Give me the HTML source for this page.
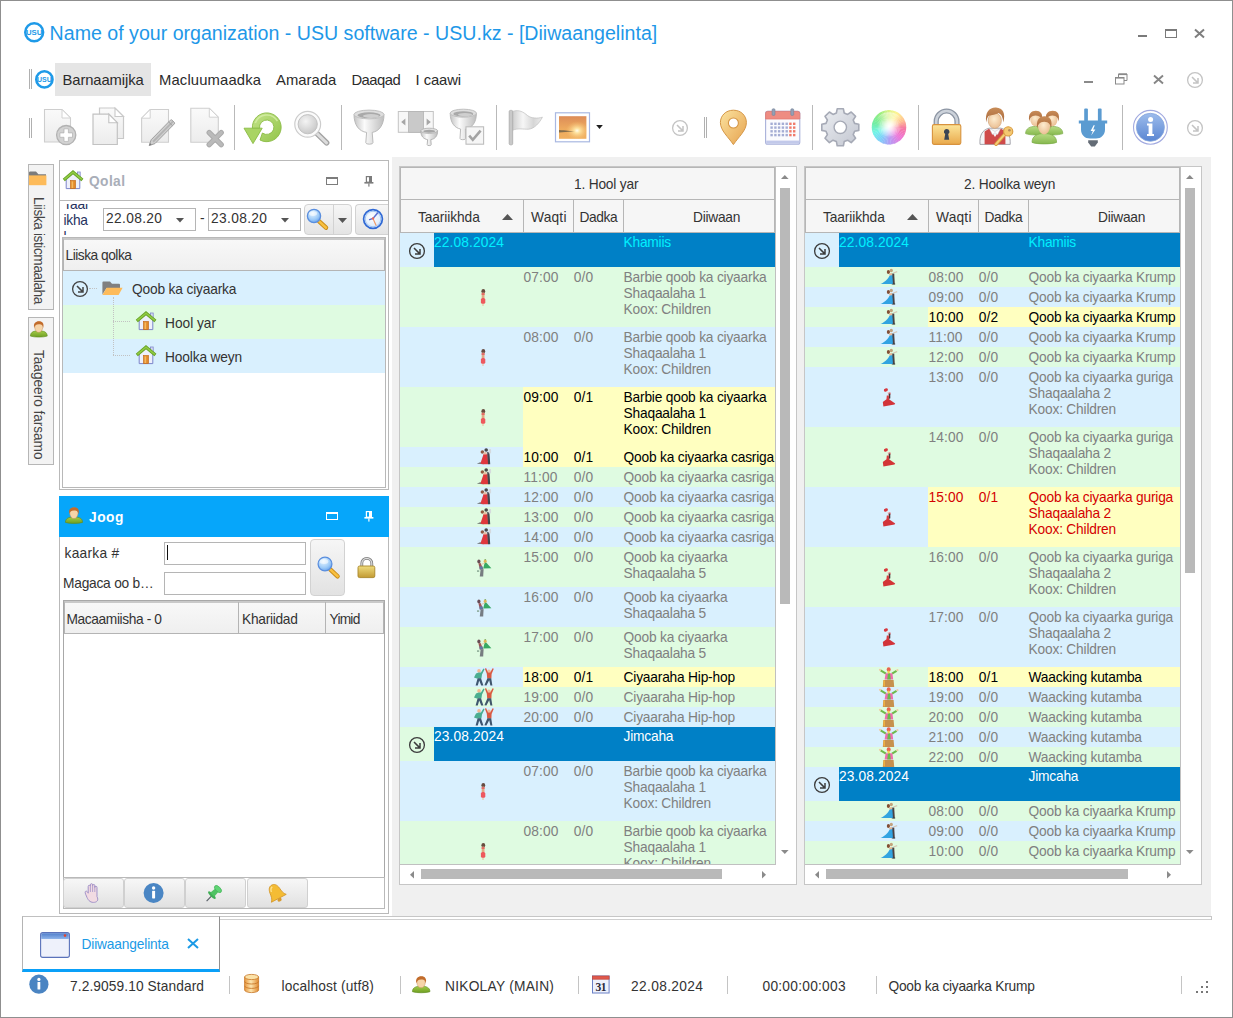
<!DOCTYPE html><html><head><meta charset='utf-8'><title>USU</title><style>
*{box-sizing:border-box;margin:0;padding:0}
html,body{width:1233px;height:1018px;overflow:hidden;background:#fff}
body{font-family:"Liberation Sans",sans-serif;font-size:13.75px;color:#222;position:relative}
.a{position:absolute}
.t{position:absolute;white-space:nowrap;line-height:16px}
.win{position:absolute;left:0;top:0;width:1233px;height:1018px;border:1px solid #8f8f8f}
.sep{position:absolute;width:1px;background:#b9b9b9}
.grip{position:absolute;width:3px;border-left:1px solid #b0b0b0;border-right:1px solid #b0b0b0}
.hdr{background:linear-gradient(#f8f8f8,#efefef);}
.gb{color:#808080}
.row{position:absolute;left:0;width:373px}
.bl{background:#d9f0fe}
.gr{background:#dffbe1}
.ye{background:#ffffc0}
.d{letter-spacing:.35px}
svg{position:absolute;overflow:visible}
</style></head><body>
<div class='win'></div>
<svg class='a' style='left:22.900000000000002px;top:21.3px' width='22.4' height='22.4' viewBox='-11.2 -11.2 22.4 22.4'><circle r='8.95' fill='#fff' stroke='#1e9ae8' stroke-width='2.5'/><text x='0' y='2.808' font-family='Liberation Sans' font-weight='bold' font-size='7.8' text-anchor='middle' fill='#1e9ae8' letter-spacing='0'>USU</text></svg>
<div class='t' style='left:49.6px;top:19px;font-size:19.6px;line-height:28px;color:#1e98e8'>Name of your organization - USU software - USU.kz - [Diiwaangelinta]</div>
<div class='a' style='left:1138px;top:35px;width:9px;height:2px;background:#7a7a7a'></div>
<div class='a' style='left:1165px;top:29px;width:12px;height:9px;border:1px solid #7a7a7a;border-top-width:2px'></div>
<svg style='left:1194px;top:29px' width='11' height='9' viewBox='0 0 11 9'><path d='M1 0.5 L10 8.5 M10 0.5 L1 8.5' stroke='#7e7e7e' stroke-width='2' fill='none'/></svg>
<div class='grip' style='left:29px;top:69px;height:20px'></div>
<svg class='a' style='left:34.2px;top:68.8px' width='20.8' height='20.8' viewBox='-10.4 -10.4 20.8 20.8'><circle r='8.1' fill='#fff' stroke='#1e9ae8' stroke-width='2.6'/><text x='0' y='2.52' font-family='Liberation Sans' font-weight='bold' font-size='7' text-anchor='middle' fill='#1e9ae8' letter-spacing='0'>USU</text></svg>
<div class='a' style='left:55px;top:63px;width:96px;height:33px;background:#e5e5e5'></div>
<div class='t' style='left:62.6px;top:70.6px;font-size:14.8px;line-height:18px;letter-spacing:-0.12px;color:#2b2b2b'>Barnaamijka</div>
<div class='t' style='left:159px;top:70.6px;font-size:14.8px;line-height:18px;letter-spacing:0.15px;color:#2b2b2b'>Macluumaadka</div>
<div class='t' style='left:276px;top:70.6px;font-size:14.8px;line-height:18px;letter-spacing:0.03px;color:#2b2b2b'>Amarada</div>
<div class='t' style='left:351.4px;top:70.6px;font-size:14.8px;line-height:18px;letter-spacing:-0.5px;color:#2b2b2b'>Daaqad</div>
<div class='t' style='left:415.6px;top:70.6px;font-size:14.8px;line-height:18px;letter-spacing:-0.09px;color:#2b2b2b'>I caawi</div>
<div class='a' style='left:1084px;top:81px;width:9px;height:2px;background:#8a8a8a'></div>
<svg style='left:1115px;top:73px' width='13' height='12' viewBox='0 0 13 12'><path d='M3.5 4 V1 H12 V7.5 H9' stroke='#8a8a8a' stroke-width='1' fill='none'/><path d='M3.5 1.3 H12' stroke='#8a8a8a' stroke-width='1.6'/><rect x='0.5' y='4.5' width='8.5' height='6.5' fill='#fff' stroke='#8a8a8a'/><path d='M0.5 4.8 H9' stroke='#8a8a8a' stroke-width='1.6'/></svg>
<svg style='left:1153px;top:75px' width='11' height='9' viewBox='0 0 11 9'><path d='M1 0.5 L10 8.5 M10 0.5 L1 8.5' stroke='#868686' stroke-width='1.9' fill='none'/></svg>
<svg style='left:1186px;top:70.5px' width='18' height='18' viewBox='-9 -9 18 18'><circle r='7.4' fill='none' stroke='#c4c4c4' stroke-width='1.3'/><path d='M-3 -3 L2.6 2.6 M3 -2 V3 H-2' stroke='#c4c4c4' stroke-width='1.5' fill='none'/></svg>
<div class='grip' style='left:29px;top:118px;height:20px'></div>
<div class='sep' style='left:234px;top:105px;height:45px'></div>
<div class='sep' style='left:340.5px;top:105px;height:45px'></div>
<div class='sep' style='left:496px;top:105px;height:45px'></div>
<div class='sep' style='left:812px;top:105px;height:45px'></div>
<div class='sep' style='left:918px;top:105px;height:45px'></div>
<div class='sep' style='left:1122px;top:105px;height:45px'></div>
<div class='grip' style='left:704px;top:117px;height:21px'></div>
<svg style='left:670.5px;top:118.5px' width='18' height='18' viewBox='-9 -9 18 18'><circle r='7.4' fill='none' stroke='#c4c4c4' stroke-width='1.3'/><path d='M-3 -3 L2.6 2.6 M3 -2 V3 H-2' stroke='#c4c4c4' stroke-width='1.5' fill='none'/></svg>
<svg style='left:1186px;top:118.5px' width='18' height='18' viewBox='-9 -9 18 18'><circle r='7.4' fill='none' stroke='#c4c4c4' stroke-width='1.3'/><path d='M-3 -3 L2.6 2.6 M3 -2 V3 H-2' stroke='#c4c4c4' stroke-width='1.5' fill='none'/></svg>
<svg style='left:0;top:100px' width='1233' height='52' viewBox='0 100 1233 52'>
<defs>
<linearGradient id='gpg' x1='0' y1='0' x2='0' y2='1'><stop offset='0' stop-color='#fafafa'/><stop offset='1' stop-color='#ececec'/></linearGradient>
<linearGradient id='ggr' x1='0' y1='0' x2='1' y2='1'><stop offset='0' stop-color='#c4e48a'/><stop offset='1' stop-color='#92c44a'/></linearGradient>
<radialGradient id='glens' cx='.4' cy='.35' r='.7'><stop offset='0' stop-color='#f4f4f4'/><stop offset='1' stop-color='#c6c6c6'/></radialGradient>
<linearGradient id='gfun' x1='0' y1='0' x2='1' y2='0'><stop offset='0' stop-color='#c4c4c4'/><stop offset='.35' stop-color='#fbfbfb'/><stop offset='1' stop-color='#bdbdbd'/></linearGradient>
<linearGradient id='gflag' x1='0' y1='0' x2='1' y2='0'><stop offset='0' stop-color='#cfcfcf'/><stop offset='.35' stop-color='#f6f6f6'/><stop offset='.7' stop-color='#d6d6d6'/><stop offset='1' stop-color='#ededed'/></linearGradient>
<linearGradient id='gsun' x1='0' y1='0' x2='0' y2='1'><stop offset='0' stop-color='#dc8c58'/><stop offset='.55' stop-color='#eeaa5e'/><stop offset='1' stop-color='#f0b060'/></linearGradient>
<radialGradient id='gglow' cx='.66' cy='.64' r='.42'><stop offset='0' stop-color='#fffdf0'/><stop offset='.25' stop-color='#ffe9a8' stop-opacity='.9'/><stop offset='1' stop-color='#f6c070' stop-opacity='0'/></radialGradient>
<linearGradient id='ggold' x1='0' y1='0' x2='0' y2='1'><stop offset='0' stop-color='#fce59a'/><stop offset='1' stop-color='#e9a94c'/></linearGradient>
<linearGradient id='gpin' x1='0' y1='0' x2='1' y2='1'><stop offset='0' stop-color='#fbe3a0'/><stop offset='1' stop-color='#e6a24e'/></linearGradient>
<linearGradient id='gshk' x1='0' y1='0' x2='1' y2='0'><stop offset='0' stop-color='#8e98a6'/><stop offset='.5' stop-color='#d6dbe2'/><stop offset='1' stop-color='#8e98a6'/></linearGradient>
<linearGradient id='ggear' x1='0' y1='0' x2='1' y2='1'><stop offset='0' stop-color='#eceef2'/><stop offset='1' stop-color='#c2c6d0'/></linearGradient>
<linearGradient id='ginfo' x1='0' y1='0' x2='0' y2='1'><stop offset='0' stop-color='#9dbcec'/><stop offset='1' stop-color='#5a86d2'/></linearGradient>
<linearGradient id='gbody' x1='0' y1='0' x2='0' y2='1'><stop offset='0' stop-color='#b8dc84'/><stop offset='1' stop-color='#86b84e'/></linearGradient>
<linearGradient id='ghair' x1='0' y1='0' x2='0' y2='1'><stop offset='0' stop-color='#c88c58'/><stop offset='1' stop-color='#a8683a'/></linearGradient>
<radialGradient id='gface' cx='.45' cy='.4' r='.7'><stop offset='0' stop-color='#fdeccf'/><stop offset='1' stop-color='#e8b88a'/></radialGradient>
</defs>

<!-- 1 new doc -->
<path d='M44.5 109.5 H62 L70.5 118 V142 H44.5 Z' fill='url(#gpg)' stroke='#cecece' stroke-width='1.1'/>
<path d='M62 109.5 V118 H70.5 Z' fill='#fff' stroke='#d2d2d2' stroke-width='1'/>
<circle cx='66.2' cy='135.1' r='9.6' fill='#d2d2d2' stroke='#b2b2b2' stroke-width='1.3'/>
<path d='M64 128.8 h4.4 v4.1 h4.1 v4.4 h-4.1 v4.1 h-4.4 v-4.1 h-4.1 v-4.4 h4.1 Z' fill='#fff' stroke='#b0b0b0' stroke-width='.7'/>

<!-- 2 copy -->
<path d='M99.5 108 H115 L123.5 116.5 V138.5 H99.5 Z' fill='url(#gpg)' stroke='#c9c9c9' stroke-width='1.2'/>
<path d='M115 108 V116.5 H123.5 Z' fill='#fff' stroke='#c9c9c9' stroke-width='1.1'/>
<path d='M93 114.2 H108.8 L117.3 122.7 V144.5 H93 Z' fill='url(#gpg)' stroke='#c2c2c2' stroke-width='1.2'/>
<path d='M108.8 114.2 V122.7 H117.3 Z' fill='#fff' stroke='#c2c2c2' stroke-width='1.1'/>

<!-- 3 edit -->
<path d='M150.2 109.5 H168.5 V142.3 H141.6 V118.2 Z' fill='url(#gpg)' stroke='#cecece' stroke-width='1.1'/>
<path d='M150.2 109.5 V118.2 H141.6 Z' fill='#fff' stroke='#d2d2d2' stroke-width='1'/>
<g transform='translate(149.2 145.6) rotate(-45.5)'>
<path d='M0 0 L5.5 -2.7 H33 a1.2 1.2 0 0 1 1.2 1.2 V1.5 a1.2 1.2 0 0 1 -1.2 1.2 H5.5 Z' fill='#cfcfcf' stroke='#9c9c9c' stroke-width='.9'/>
<path d='M5.5 -0.9 H34 V1 H5.5 Z' fill='#b4b4b4'/>
<path d='M0 0 L2.4 -1.2 V1.2 Z' fill='#7e7e7e'/>
<path d='M30.5 -2.7 V2.7' stroke='#9c9c9c' stroke-width='.9'/>
</g>

<!-- 4 delete -->
<path d='M190.8 108.2 H209.3 L218.3 117.2 V142.3 H190.8 Z' fill='url(#gpg)' stroke='#cecece' stroke-width='1.1'/>
<path d='M209.3 108.2 V117.2 H218.3 Z' fill='#fff' stroke='#d2d2d2' stroke-width='1'/>
<path d='M209.2 132.6 L221.2 144.6 M221.2 132.6 L209.2 144.6' stroke='#ababab' stroke-width='5.4' stroke-linecap='round'/>
<path d='M209.2 132.6 L221.2 144.6 M221.2 132.6 L209.2 144.6' stroke='#bababa' stroke-width='3.4' stroke-linecap='round'/>

<!-- 5 refresh -->
<path d='M252.4 128.4 A14.4 14.4 0 1 1 260.0 140.0 L262.4 133.0 A7.2 7.2 0 1 0 259.6 128.4 Z' fill='url(#ggr)' stroke='#8abb44' stroke-width='.9'/>
<path d='M244 128.2 H262.2 L253 143.6 Z' fill='#a9d464' stroke='#8abb44' stroke-width='.9' stroke-linejoin='round'/>
<path d='M255.3 123.1 A12.2 12.2 0 0 1 277.4 121.2' fill='none' stroke='#d6efa6' stroke-width='1.6' opacity='.8'/>

<!-- 6 search -->
<path d='M316 132.6 L326.6 142.8' stroke='#a2a2a2' stroke-width='5.6' stroke-linecap='round'/>
<path d='M316 132.6 L326.6 142.8' stroke='#dcdcdc' stroke-width='3' stroke-linecap='round'/>
<circle cx='307.7' cy='124.2' r='12.9' fill='#fbfbfb' stroke='#cdcdcd' stroke-width='1.2'/>
<circle cx='307.7' cy='124.2' r='9.6' fill='url(#glens)' stroke='#c2c2c2' stroke-width='1'/>

<!-- 7 funnel -->
<path d='M354 114.5 C354 125 359 131.4 366.6 132.4 L365.8 142.6 a3.6 1.6 0 0 0 7.2 0 L372.2 132.4 C379 131.4 384 125 384 114.5 Z' fill='url(#gfun)' stroke='#b4b4b4' stroke-width='.9'/>
<ellipse cx='369' cy='114.5' rx='15' ry='4.4' fill='#dedede' stroke='#c0c0c0' stroke-width='1'/>
<ellipse cx='369' cy='115.2' rx='11.6' ry='2.9' fill='#a9a9a9'/>
<ellipse cx='371' cy='116' rx='8' ry='1.9' fill='#cfcfcf'/>

<!-- 8 slider + funnel -->
<rect x='398.3' y='111.5' width='35' height='20.8' fill='#f7f7f7' stroke='#c4c4c4' stroke-width='1'/>
<rect x='408.6' y='111.5' width='15' height='20.8' fill='#c9c9c9' stroke='#b4b4b4' stroke-width='.8'/>
<path d='M405.4 118.4 V125.6 L401.2 122 Z' fill='#a6a6a6'/>
<path d='M426.6 118.4 V125.6 L430.8 122 Z' fill='#a6a6a6'/>
<path d='M420.8 130.8 C420.8 136.4 423.6 139 427.6 139.6 L427.2 144.6 a2 1 0 0 0 4 0 L430.8 139.6 C434.8 139 437.6 136.4 437.6 130.8 Z' fill='url(#gfun)' stroke='#aeaeae' stroke-width='.9'/>
<ellipse cx='429.2' cy='130.8' rx='8.4' ry='2.6' fill='#e2e2e2' stroke='#b4b4b4' stroke-width='.9'/>
<ellipse cx='429.2' cy='131.2' rx='6' ry='1.5' fill='#a6a6a6'/>

<!-- 9 funnel + check -->
<path d='M450.2 113.2 C450.2 122.6 454.6 128 460.6 129 L460 138.4 a2.8 1.3 0 0 0 5.6 0 L465.4 129 C472 128 476.4 122.6 476.4 113.2 Z' fill='url(#gfun)' stroke='#b4b4b4' stroke-width='.9'/>
<ellipse cx='463.3' cy='113.2' rx='13.1' ry='4' fill='#dedede' stroke='#c0c0c0' stroke-width='1'/>
<ellipse cx='463.3' cy='113.9' rx='10' ry='2.6' fill='#a9a9a9'/>
<ellipse cx='465' cy='114.6' rx='7' ry='1.7' fill='#cfcfcf'/>
<rect x='466' y='126.8' width='17.6' height='17.4' fill='#f6f6f6' stroke='#bdbdbd' stroke-width='1.1'/>
<path d='M469.2 135.6 L472.8 139.8 L480.6 130.6' fill='none' stroke='#a4a4a4' stroke-width='2.6'/>

<!-- 10 flag -->
<path d='M512.6 111.4 C519 109.2 523.6 112.2 527.6 115.6 C531.6 118.6 537.6 118.6 542.4 117.2 C539.6 122.6 534.6 128.6 528.6 129.2 C523.4 129.4 518.6 127.8 512.6 130.2 Z' fill='url(#gflag)' stroke='#c4c4c4' stroke-width='.8'/>
<rect x='509.2' y='110.4' width='3.5' height='34.4' rx='1.2' fill='#c9c9c9' stroke='#a9a9a9' stroke-width='.8'/>

<!-- 11 picture -->
<rect x='555.5' y='112.8' width='34' height='29' fill='#fff' stroke='#a9b8e2' stroke-width='1.2'/>
<rect x='559' y='116.2' width='27.4' height='22.6' fill='url(#gsun)'/>
<rect x='559' y='116.2' width='27.4' height='22.6' fill='url(#gglow)'/>
<path d='M559 130 C566 130.4 570 131.2 575 131.2 L559 132.4 Z' fill='#6e6048' opacity='.85'/>
<path d='M596.2 125 H602.8 L599.5 128.9 Z' fill='#1e1e1e'/>

<!-- 12 map pin -->
<path d='M733.4 110.2 C741.2 110.2 746.4 115.8 746.4 122.6 C746.4 130.6 738.4 137 733.4 144.6 C728.4 137 720.4 130.6 720.4 122.6 C720.4 115.8 725.6 110.2 733.4 110.2 Z' fill='url(#gpin)' stroke='#d59645' stroke-width='1'/>
<circle cx='733.4' cy='123' r='5' fill='#fff' stroke='#d59645' stroke-width='1.1'/>

<!-- 13 calendar -->
<rect x='765.6' y='111.4' width='34.2' height='32.8' rx='2' fill='#fbfbfe' stroke='#a9b1da' stroke-width='1.1'/>
<path d='M765.6 119 V113.4 a2 2 0 0 1 2 -2 H797.8 a2 2 0 0 1 2 2 V119 Z' fill='#ee8c82' stroke='#e27a72' stroke-width='.8'/>
<rect x='766.2' y='140.6' width='33' height='3.2' fill='#c2c9ea'/>
<rect x='772.1' y='108.8' width='2.9' height='6.6' rx='1' fill='#93a0b6' stroke='#76849a' stroke-width='.6'/>
<rect x='790.8' y='108.8' width='2.9' height='6.6' rx='1' fill='#93a0b6' stroke='#76849a' stroke-width='.6'/>
<g fill='#a5add4'>
<rect x='770.4' y='122.6' width='2.4' height='2.4'/><rect x='774.2' y='122.6' width='2.4' height='2.4'/><rect x='777.9' y='122.6' width='2.4' height='2.4'/><rect x='781.7' y='122.6' width='2.4' height='2.4'/><rect x='785.5' y='122.6' width='2.4' height='2.4'/><rect x='789.2' y='122.6' width='2.4' height='2.4' fill='#f07a6a'/><rect x='793.0' y='122.6' width='2.4' height='2.4' fill='#f07a6a'/><rect x='770.4' y='126.4' width='2.4' height='2.4'/><rect x='774.2' y='126.4' width='2.4' height='2.4'/><rect x='777.9' y='126.4' width='2.4' height='2.4'/><rect x='781.7' y='126.4' width='2.4' height='2.4'/><rect x='785.5' y='126.4' width='2.4' height='2.4'/><rect x='789.2' y='126.4' width='2.4' height='2.4' fill='#f07a6a'/><rect x='793.0' y='126.4' width='2.4' height='2.4' fill='#f07a6a'/><rect x='770.4' y='130.1' width='2.4' height='2.4'/><rect x='774.2' y='130.1' width='2.4' height='2.4'/><rect x='777.9' y='130.1' width='2.4' height='2.4'/><rect x='781.7' y='130.1' width='2.4' height='2.4'/><rect x='785.5' y='130.1' width='2.4' height='2.4'/><rect x='789.2' y='130.1' width='2.4' height='2.4' fill='#f07a6a'/><rect x='793.0' y='130.1' width='2.4' height='2.4' fill='#f07a6a'/><rect x='770.4' y='133.9' width='2.4' height='2.4'/><rect x='774.2' y='133.9' width='2.4' height='2.4'/><rect x='777.9' y='133.9' width='2.4' height='2.4'/><rect x='781.7' y='133.9' width='2.4' height='2.4'/><rect x='785.5' y='133.9' width='2.4' height='2.4'/><rect x='789.2' y='133.9' width='2.4' height='2.4' fill='#f07a6a'/><rect x='793.0' y='133.9' width='2.4' height='2.4' fill='#f07a6a'/>
</g>

<!-- 14 gear -->
<path d='M836.4 113.0 L837.2 108.8 L843.4 108.8 L844.2 113.0 L847.6 114.4 L851.2 112.0 L855.6 116.4 L853.2 120.0 L854.6 123.4 L858.8 124.2 L858.8 130.4 L854.6 131.2 L853.2 134.6 L855.6 138.2 L851.2 142.6 L847.6 140.2 L844.2 141.6 L843.4 145.8 L837.2 145.8 L836.4 141.6 L833.0 140.2 L829.4 142.6 L825.0 138.2 L827.4 134.6 L826.0 131.2 L821.8 130.4 L821.8 124.2 L826.0 123.4 L827.4 120.0 L825.0 116.4 L829.4 112.0 L833.0 114.4 Z' fill='url(#ggear)' stroke='#a6aab6' stroke-width='1.6' stroke-linejoin='round'/><circle cx='840.3' cy='127.3' r='6.2' fill='#fff' stroke='#a6aab6' stroke-width='1.4'/>

<!-- 15 colour wheel: foreignObject-free fallback drawn with wedges -->
<defs><radialGradient id='gwh' cx='.5' cy='.47' r='.5'><stop offset='0' stop-color='#fff'/><stop offset='.2' stop-color='#fff' stop-opacity='.8'/><stop offset='.7' stop-color='#fff' stop-opacity='0'/></radialGradient><linearGradient id='gwh2' x1='0' y1='0' x2='0' y2='1'><stop offset='0' stop-color='#fff' stop-opacity='.55'/><stop offset='.5' stop-color='#fff' stop-opacity='0'/></linearGradient></defs><path d='M889 127.3 L888.82 110.10 A17.2 17.2 0 0 1 890.98 110.21 Z' fill='#e0f486'/><path d='M889 127.3 L890.62 110.18 A17.2 17.2 0 0 1 892.75 110.51 Z' fill='#e7f488'/><path d='M889 127.3 L892.40 110.44 A17.2 17.2 0 0 1 894.49 111.00 Z' fill='#edf48b'/><path d='M889 127.3 L894.14 110.89 A17.2 17.2 0 0 1 896.16 111.66 Z' fill='#f5f48d'/><path d='M889 127.3 L895.83 111.51 A17.2 17.2 0 0 1 897.76 112.50 Z' fill='#fbf490'/><path d='M889 127.3 L897.44 112.32 A17.2 17.2 0 0 1 899.26 113.49 Z' fill='#fff091'/><path d='M889 127.3 L898.96 113.28 A17.2 17.2 0 0 1 900.64 114.64 Z' fill='#ffe791'/><path d='M889 127.3 L900.37 114.40 A17.2 17.2 0 0 1 901.90 115.93 Z' fill='#ffde91'/><path d='M889 127.3 L901.66 115.66 A17.2 17.2 0 0 1 903.02 117.34 Z' fill='#ffd591'/><path d='M889 127.3 L902.81 117.04 A17.2 17.2 0 0 1 903.98 118.86 Z' fill='#ffcc91'/><path d='M889 127.3 L903.80 118.54 A17.2 17.2 0 0 1 904.79 120.47 Z' fill='#ffc391'/><path d='M889 127.3 L904.64 120.14 A17.2 17.2 0 0 1 905.41 122.16 Z' fill='#feb694'/><path d='M889 127.3 L905.30 121.81 A17.2 17.2 0 0 1 905.86 123.90 Z' fill='#fba797'/><path d='M889 127.3 L905.79 123.55 A17.2 17.2 0 0 1 906.12 125.68 Z' fill='#fa989a'/><path d='M889 127.3 L906.09 125.32 A17.2 17.2 0 0 1 906.20 127.48 Z' fill='#f8899e'/><path d='M889 127.3 L906.20 127.12 A17.2 17.2 0 0 1 906.09 129.28 Z' fill='#f67aa1'/><path d='M889 127.3 L906.12 128.92 A17.2 17.2 0 0 1 905.79 131.05 Z' fill='#f576a8'/><path d='M889 127.3 L905.86 130.70 A17.2 17.2 0 0 1 905.30 132.79 Z' fill='#f476b0'/><path d='M889 127.3 L905.41 132.44 A17.2 17.2 0 0 1 904.64 134.46 Z' fill='#f276b8'/><path d='M889 127.3 L904.79 134.13 A17.2 17.2 0 0 1 903.80 136.06 Z' fill='#f176c0'/><path d='M889 127.3 L903.98 135.74 A17.2 17.2 0 0 1 902.81 137.56 Z' fill='#f076c9'/><path d='M889 127.3 L903.02 137.26 A17.2 17.2 0 0 1 901.66 138.94 Z' fill='#ef77d1'/><path d='M889 127.3 L901.90 138.67 A17.2 17.2 0 0 1 900.37 140.20 Z' fill='#ed77da'/><path d='M889 127.3 L900.64 139.96 A17.2 17.2 0 0 1 898.96 141.32 Z' fill='#e57cde'/><path d='M889 127.3 L899.26 141.11 A17.2 17.2 0 0 1 897.44 142.28 Z' fill='#dd82e2'/><path d='M889 127.3 L897.76 142.10 A17.2 17.2 0 0 1 895.83 143.09 Z' fill='#d587e5'/><path d='M889 127.3 L896.16 142.94 A17.2 17.2 0 0 1 894.14 143.71 Z' fill='#cc8ce9'/><path d='M889 127.3 L894.49 143.60 A17.2 17.2 0 0 1 892.40 144.16 Z' fill='#c491ed'/><path d='M889 127.3 L892.75 144.09 A17.2 17.2 0 0 1 890.62 144.42 Z' fill='#bd96f1'/><path d='M889 127.3 L890.98 144.39 A17.2 17.2 0 0 1 888.82 144.50 Z' fill='#b49cf4'/><path d='M889 127.3 L889.18 144.50 A17.2 17.2 0 0 1 887.02 144.39 Z' fill='#aca4f5'/><path d='M889 127.3 L887.38 144.42 A17.2 17.2 0 0 1 885.25 144.09 Z' fill='#a3acf6'/><path d='M889 127.3 L885.60 144.16 A17.2 17.2 0 0 1 883.51 143.60 Z' fill='#9ab4f7'/><path d='M889 127.3 L883.86 143.71 A17.2 17.2 0 0 1 881.84 142.94 Z' fill='#91bcf8'/><path d='M889 127.3 L882.17 143.09 A17.2 17.2 0 0 1 880.24 142.10 Z' fill='#89c3f9'/><path d='M889 127.3 L880.56 142.28 A17.2 17.2 0 0 1 878.74 141.11 Z' fill='#81ccfa'/><path d='M889 127.3 L879.04 141.32 A17.2 17.2 0 0 1 877.36 139.96 Z' fill='#7cd2f8'/><path d='M889 127.3 L877.63 140.20 A17.2 17.2 0 0 1 876.10 138.67 Z' fill='#7ad9f5'/><path d='M889 127.3 L876.34 138.94 A17.2 17.2 0 0 1 874.98 137.26 Z' fill='#78dff1'/><path d='M889 127.3 L875.19 137.56 A17.2 17.2 0 0 1 874.02 135.74 Z' fill='#76e6ee'/><path d='M889 127.3 L874.20 136.06 A17.2 17.2 0 0 1 873.21 134.13 Z' fill='#73eceb'/><path d='M889 127.3 L873.36 134.46 A17.2 17.2 0 0 1 872.59 132.44 Z' fill='#71f3e8'/><path d='M889 127.3 L872.70 132.79 A17.2 17.2 0 0 1 872.14 130.70 Z' fill='#71f3de'/><path d='M889 127.3 L872.21 131.05 A17.2 17.2 0 0 1 871.88 128.92 Z' fill='#71f1d2'/><path d='M889 127.3 L871.91 129.28 A17.2 17.2 0 0 1 871.80 127.12 Z' fill='#71f1c7'/><path d='M889 127.3 L871.80 127.48 A17.2 17.2 0 0 1 871.91 125.32 Z' fill='#71f0bb'/><path d='M889 127.3 L871.88 125.68 A17.2 17.2 0 0 1 872.21 123.55 Z' fill='#71eeb1'/><path d='M889 127.3 L872.14 123.90 A17.2 17.2 0 0 1 872.70 121.81 Z' fill='#71eda5'/><path d='M889 127.3 L872.59 122.16 A17.2 17.2 0 0 1 873.36 120.14 Z' fill='#76ed9f'/><path d='M889 127.3 L873.21 120.47 A17.2 17.2 0 0 1 874.20 118.54 Z' fill='#7bed9a'/><path d='M889 127.3 L874.02 118.86 A17.2 17.2 0 0 1 875.19 117.04 Z' fill='#80ed93'/><path d='M889 127.3 L874.98 117.34 A17.2 17.2 0 0 1 876.34 115.66 Z' fill='#85ed8d'/><path d='M889 127.3 L876.10 115.93 A17.2 17.2 0 0 1 877.63 114.40 Z' fill='#8bed88'/><path d='M889 127.3 L877.36 114.64 A17.2 17.2 0 0 1 879.04 113.28 Z' fill='#90ed82'/><path d='M889 127.3 L878.74 113.49 A17.2 17.2 0 0 1 880.56 112.32 Z' fill='#97ed7e'/><path d='M889 127.3 L880.24 112.50 A17.2 17.2 0 0 1 882.17 111.51 Z' fill='#a4ef7f'/><path d='M889 127.3 L881.84 111.66 A17.2 17.2 0 0 1 883.86 110.89 Z' fill='#b1f080'/><path d='M889 127.3 L883.51 111.00 A17.2 17.2 0 0 1 885.60 110.44 Z' fill='#bdf182'/><path d='M889 127.3 L885.25 110.51 A17.2 17.2 0 0 1 887.38 110.18 Z' fill='#caf283'/><path d='M889 127.3 L887.02 110.21 A17.2 17.2 0 0 1 889.18 110.10 Z' fill='#d6f384'/><circle cx='889' cy='127.3' r='17.2' fill='url(#gwh)'/><ellipse cx='889' cy='120.3' rx='12' ry='8' fill='url(#gwh2)'/>

<!-- 16 lock -->
<path d='M936.2 126 V121.4 a10.4 10.4 0 0 1 20.8 0 V126' fill='none' stroke='#8c95a3' stroke-width='5.2'/>
<path d='M936.2 126 V121.4 a10.4 10.4 0 0 1 20.8 0 V126' fill='none' stroke='#ccd2da' stroke-width='2.6'/>
<rect x='932.4' y='124.6' width='28.4' height='19.8' rx='1.6' fill='url(#ggold)' stroke='#d8923e' stroke-width='1.1'/>
<path d='M946.7 129 a2.7 2.7 0 0 1 1.5 5 L949.2 139.8 H944.2 L945.2 134 a2.7 2.7 0 0 1 1.5 -5 Z' fill='#3c4654'/>

<!-- 17 user + key -->
<path d='M980 144.4 C979.4 135.6 982 130 989 128.2 H1001 C1008 130 1010.6 135.6 1010.2 144.4 Z' fill='#f4f4f6' stroke='#9c9ca4' stroke-width='.9'/>
<path d='M984.6 144.2 V131.4 L989.4 128.4 L995 137 L1000.6 128.4 L1005.4 131.4 V144.2 Z' fill='#cf4a4a'/>
<path d='M989.4 128.4 L995 131.6 L1000.6 128.4 L997.6 134.6 L995 132.6 L992.4 134.6 Z' fill='#fff' stroke='#c4c4cc' stroke-width='.5'/>
<ellipse cx='994.8' cy='120.6' rx='6.6' ry='7.8' fill='url(#gface)' stroke='#c8986c' stroke-width='.6'/>
<path d='M986.4 122.4 C984.4 112 990 107 996 107.4 C1003 107.8 1006 113.6 1003.2 122.4 C1003 117.4 1001.6 114.6 998.6 113 C994.6 115.4 989.6 114.8 988.2 116.6 C987 118 986.8 120 986.4 122.4 Z' fill='url(#ghair)'/>
<path d='M996 144.2 L1004.4 134.6' stroke='#d89a3e' stroke-width='3.6' stroke-linecap='round'/>
<path d='M996 144.2 L1004.4 134.6' stroke='#f6cf7a' stroke-width='1.8' stroke-linecap='round'/>
<circle cx='1008.2' cy='131.4' r='4.6' fill='#f4c870' stroke='#d89a3e' stroke-width='1.1'/>
<circle cx='1009.4' cy='130.2' r='1.3' fill='#b88a58'/>

<!-- 18 group -->
<path d='M1025.6 133.6 C1025.6 128.4 1030 126.4 1035.5 126.4 C1041 126.4 1045.4 128.4 1045.4 133.6 C1041 135.4 1030 135.4 1025.6 133.6 Z' fill='url(#gbody)' stroke='#7aaa46' stroke-width='.7'/>
<path d='M1042.6 133.6 C1042.6 128.4 1047 126.4 1052.3 126.4 C1058 126.4 1062.8 128.4 1062.8 133.6 C1058 135.4 1047 135.4 1042.6 133.6 Z' fill='url(#gbody)' stroke='#7aaa46' stroke-width='.7'/>
<ellipse cx='1035.5' cy='119.4' rx='5.2' ry='6.8' fill='url(#gface)'/>
<path d='M1029.4 121.6 C1027.6 113.6 1031.6 110.8 1035.8 110.8 C1040.6 110.8 1043.6 114 1041.6 121.6 C1041.4 117.6 1040 115.6 1035.6 115.4 C1031.4 115.6 1029.8 117.6 1029.4 121.6 Z' fill='url(#ghair)'/>
<ellipse cx='1052.3' cy='119.4' rx='5.2' ry='6.8' fill='url(#gface)'/>
<path d='M1046.2 121.6 C1044.4 113.6 1048.4 110.8 1052.6 110.8 C1057.4 110.8 1060.4 114 1058.4 121.6 C1058.2 117.6 1056.8 115.6 1052.4 115.4 C1048.2 115.6 1046.6 117.6 1046.2 121.6 Z' fill='url(#ghair)'/>
<path d='M1032 142.4 C1032 136 1037 133.6 1044.1 133.6 C1051.4 133.6 1056.6 136 1056.6 142.4 C1051.4 144.4 1037 144.4 1032 142.4 Z' fill='url(#gbody)' stroke='#7aaa46' stroke-width='.7'/>
<ellipse cx='1044.1' cy='126.6' rx='5.9' ry='7.8' fill='url(#gface)'/>
<path d='M1037.4 129 C1035.4 120 1039.6 116.2 1044.4 116.2 C1049.8 116.2 1053.2 120 1050.8 129 C1050.6 124.4 1049.2 122 1044.2 121.8 C1039.4 122 1037.8 124.4 1037.4 129 Z' fill='url(#ghair)'/>

<!-- 19 plug -->
<rect x='1084.2' y='108.6' width='3.7' height='13' rx='1' fill='#5b9bd1'/>
<rect x='1097.9' y='108.6' width='3.7' height='13' rx='1' fill='#5b9bd1'/>
<path d='M1078.8 120.4 H1107.2 V123.4 H1105 V129.6 C1105 135.2 1101 138.6 1096 138.6 H1090 C1085 138.6 1081 135.2 1081 129.6 V123.4 H1078.8 Z' fill='#5b9bd1'/>
<path d='M1093.6 125.2 L1090.6 131 H1092.8 L1091.2 135.6 L1095.4 129.4 H1093.2 L1094.8 125.2 Z' fill='#fff'/>
<path d='M1088.2 140.3 H1097.8 V142.6 L1094.8 146.4 H1091.2 L1088.2 142.6 Z' fill='#646c76'/>

<!-- 20 info -->
<circle cx='1150.4' cy='127.3' r='16.9' fill='#fff' stroke='#a2aae0' stroke-width='1.1'/>
<circle cx='1150.4' cy='127.3' r='14' fill='url(#ginfo)' stroke='#86a4dc' stroke-width='.8'/>
<circle cx='1150.6' cy='119.6' r='2.5' fill='#fff'/>
<path d='M1147 123.6 H1152.4 V134 H1154 V136 H1147 V134 H1148.6 V125.6 H1147 Z' fill='#fff'/>
</svg>

<div class='a' style='left:392px;top:157px;width:819px;height:759px;background:#f0f0f0'></div>
<div class='a' style='left:22px;top:916px;width:1190px;height:1px;background:#c6c6c6'></div>
<div class='a' style='left:220px;top:919px;width:992px;height:1px;background:#cfcfcf'></div>
<div class='a' style='left:1211px;top:916px;width:1px;height:4px;background:#c6c6c6'></div>
<div class='a' style='left:28px;top:164px;width:26px;height:146px;border:1px solid #b6b6b6;background:#f3f3f3'></div>
<div class='a' style='left:28px;top:317px;width:26px;height:148px;border:1px solid #b6b6b6;background:#f3f3f3'></div>
<div class='t' style='left:45.6px;top:196.5px;transform-origin:0 0;transform:rotate(90deg);color:#444;letter-spacing:-0.44px'>Liiska isticmaalaha</div>
<div class='t' style='left:45.6px;top:350px;transform-origin:0 0;transform:rotate(90deg);color:#444;letter-spacing:-0.08px'>Taageero farsamo</div>
<svg style='left:29px;top:171px' width='18' height='15' viewBox='0 0 18 15'><path d='M0 14 V1.6 a1.2 1.2 0 0 1 1.2 -1.2 H7 L9.4 3.2 H17 V14 Z' fill='#7c7c7c'/><rect x='0' y='4.4' width='17.4' height='9.8' fill='#fdbb5a'/></svg><svg style='left:30px;top:321.4px' width='17.64' height='16.66' viewBox='0 0 18 17'><defs><linearGradient id='gub' x1='0' y1='0' x2='0' y2='1'><stop offset='0' stop-color='#a4cc48'/><stop offset='1' stop-color='#6e9e22'/></linearGradient></defs><path d='M0.4 15.4 C0.4 11.2 4 10 9 10 C14 10 17.6 11.2 17.6 15.4 C13.6 16.8 4.4 16.8 0.4 15.4 Z' fill='url(#gub)' stroke='#5e8a1e' stroke-width='.6'/><ellipse cx='8.9' cy='6.2' rx='4.1' ry='5.4' fill='#f6d4a8' stroke='#c8905c' stroke-width='.5'/><path d='M4.4 7.2 C3 2.4 5.8 0.2 9.2 0.2 C12.8 0.2 14.8 2.8 13.4 7.2 C13.2 4.6 12.4 3.4 9 3.4 C6 3.4 4.8 4.6 4.4 7.2 Z' fill='#c26c2c'/></svg>
<div class='a' style='left:59px;top:160px;width:330px;height:330px;border:1px solid #b9b9b9;background:#fff'></div>
<div class='a' style='left:60px;top:200px;width:328px;height:1px;background:#b9b9b9'></div>
<div class='t' style='left:89px;top:174.2px;font-weight:bold;color:#a9aeb8;font-size:13.75px;letter-spacing:.4px'>Qolal</div>
<div class='a' style='left:326px;top:177px;width:12px;height:8px;border:1px solid #7c7c7c;border-top-width:2px'></div>
<svg style='left:63.4px;top:169.6px' width='21.0' height='20.0' viewBox='0 0 21 20'><rect x='14.4' y='2' width='2.8' height='5' fill='#d8dcf4' stroke='#8088cc' stroke-width='.8'/><path d='M3.2 8.2 L10 2.6 L16.8 8.2 V18.6 H3.2 Z' fill='#eef0fb' stroke='#7b85ca' stroke-width='1'/><rect x='7.6' y='10.6' width='4.8' height='8' fill='#e38a2a' stroke='#c46a18' stroke-width='.7'/><rect x='8.6' y='11.4' width='1.6' height='6.6' fill='#f4b860'/><path d='M0.8 10 L10 2.2 L19.4 10' fill='none' stroke='#66a226' stroke-width='3.2' stroke-linejoin='miter'/><path d='M1.4 9.4 L10 2.2 L18.8 9.4' fill='none' stroke='#92cc44' stroke-width='1.5'/></svg><svg style='left:364px;top:176px' width='10' height='11' viewBox='0 0 10 11'><rect x='2.4' y='0.6' width='5' height='5.6' fill='none' stroke='#7c7c7c' stroke-width='1.2'/><rect x='5' y='0.6' width='2.4' height='5.6' fill='#7c7c7c'/><rect x='0.4' y='6' width='9' height='1.6' fill='#7c7c7c'/><rect x='4.3' y='7.4' width='1.2' height='3.2' fill='#7c7c7c'/></svg>
<div class='a' style='left:60px;top:204px;width:40px;height:31px;overflow:hidden'><div class='t' style='left:3.4px;top:-7.2px;line-height:16.4px;font-size:13.75px;color:#26325e;white-space:normal;width:30px;letter-spacing:-.2px'>Taar<br>ikha<br>l</div></div>
<div class='a' style='left:103px;top:208px;width:93px;height:23px;border:1px solid #b5b5b5;background:#fff'></div><div class='a' style='left:106px;top:210px;width:55.6px;height:18px;overflow:hidden'><div class='t d' style='left:0;top:1px;color:#333'>22.08.2024</div></div><svg style='left:176px;top:218px' width='8' height='5'><path d='M0 0 H8 L4 4.5 Z' fill='#555'/></svg>
<div class='t' style='left:200px;top:211px;color:#333'>-</div>
<div class='a' style='left:208px;top:208px;width:93px;height:23px;border:1px solid #b5b5b5;background:#fff'></div><div class='a' style='left:211px;top:210px;width:55.6px;height:18px;overflow:hidden'><div class='t d' style='left:0;top:1px;color:#333'>23.08.2024</div></div><svg style='left:281px;top:218px' width='8' height='5'><path d='M0 0 H8 L4 4.5 Z' fill='#555'/></svg>
<div class='a' style='left:304px;top:204px;width:48px;height:31px;border:1px solid #d2d2d2;border-radius:4px;background:linear-gradient(#f6f6f6,#e4e4e4)'></div>
<div class='a' style='left:333px;top:205px;width:1px;height:29px;background:#d2d2d2'></div>
<svg style='left:338px;top:218px' width='9' height='5'><path d='M0 0 H9 L4.5 5 Z' fill='#555'/></svg>
<div class='a' style='left:355px;top:204px;width:33px;height:31px;border:1px solid #d2d2d2;border-right:none;border-radius:4px 0 0 4px;background:linear-gradient(#f6f6f6,#e4e4e4)'></div>
<svg style='left:305.3px;top:206.5px' width='26' height='26' viewBox='-9 -9 26 26'><defs><radialGradient id='gmg' cx='.4' cy='.3' r='.8'><stop offset='0' stop-color='#e8f6ff'/><stop offset='.6' stop-color='#9ccaf8'/><stop offset='1' stop-color='#5a98ea'/></radialGradient></defs><path d='M4.9 5.1 L12.0 11.7' stroke='#c88a18' stroke-width='4.4' stroke-linecap='round'/><path d='M4.9 5.1 L12.0 11.7' stroke='#f8c040' stroke-width='2.6' stroke-linecap='round'/><circle r='6.6' fill='url(#gmg)' stroke='#5a8ede' stroke-width='1.3'/><ellipse cx='-1' cy='-2.4' rx='4.1' ry='2.4' fill='#fff' opacity='.55'/></svg><svg style='left:361.7px;top:207.6px' width='22' height='22' viewBox='-11 -11 22 22'><defs><radialGradient id='gck' cx='.45' cy='.4' r='.7'><stop offset='0' stop-color='#ffffff'/><stop offset='1' stop-color='#cfe4fb'/></radialGradient></defs><circle r='9.4' fill='url(#gck)' stroke='#2f68d4' stroke-width='1.7'/><circle r='7.800000000000001' fill='none' stroke='#9cc0f0' stroke-width='.9'/><path d='M-3.4 0.6 L0 -0.6 L4.6 -6' fill='none' stroke='#5a6ed0' stroke-width='1.5' stroke-linecap='round'/><path d='M0 -0.6 L3 6.2' stroke='#f09a6a' stroke-width='1.2' stroke-linecap='round'/><circle cx='0' cy='-0.6' r='1.2' fill='#e86a5a'/></svg>
<div class='a' style='left:62px;top:237px;width:324px;height:251px;border:1px solid #b8b8b8;background:#fff'></div>
<div class='a hdr' style='left:63px;top:238px;width:322px;height:33px;border:1px solid #b4b4b4;border-top:2px solid #c9c9c9'></div>
<div class='t' style='left:65.5px;top:248.3px;color:#333;letter-spacing:-0.49px'>Liiska qolka</div>
<div class='a bl' style='left:63px;top:271px;width:322px;height:34px'></div>
<div class='a gr' style='left:63px;top:305px;width:322px;height:34px'></div>
<div class='a bl' style='left:63px;top:339px;width:322px;height:34px'></div>
<svg style='left:70.5px;top:279.5px' width='18' height='18' viewBox='-9 -9 18 18'><circle r='7.4' fill='none' stroke='#444' stroke-width='1.3'/><path d='M-3 -3 L2.6 2.6 M3 -2 V3 H-2' stroke='#444' stroke-width='1.5' fill='none'/></svg>
<div class='a' style='left:89px;top:288px;width:8px;height:0;border-top:1px dotted #c2c2c2'></div>
<div class='a' style='left:113px;top:297px;width:0;height:58px;border-left:1px dotted #c2c2c2'></div>
<div class='a' style='left:113px;top:321px;width:17px;height:0;border-top:1px dotted #c2c2c2'></div>
<div class='a' style='left:113px;top:355px;width:17px;height:0;border-top:1px dotted #c2c2c2'></div>
<div class='t' style='left:132px;top:282.4px;color:#333;letter-spacing:-0.17px'>Qoob ka ciyaarka</div>
<div class='t' style='left:165px;top:316.4px;color:#333;letter-spacing:-0.03px'>Hool yar</div>
<div class='t' style='left:165px;top:350.4px;color:#333;letter-spacing:-0.15px'>Hoolka weyn</div>
<svg style='left:102px;top:281px' width='22' height='15' viewBox='0 0 22 15'><path d='M0.4 13.6 V1.4 a1 1 0 0 1 1 -1 H8 L10 2.8 H17 a1 1 0 0 1 1 1 V7 H4.6 Z' fill='#808080'/><path d='M4.6 6.8 H20.6 L16.6 14 H0.4 Z' fill='#fdbb5a'/></svg><svg style='left:136px;top:310.6px' width='21.0' height='20.0' viewBox='0 0 21 20'><rect x='14.4' y='2' width='2.8' height='5' fill='#d8dcf4' stroke='#8088cc' stroke-width='.8'/><path d='M3.2 8.2 L10 2.6 L16.8 8.2 V18.6 H3.2 Z' fill='#eef0fb' stroke='#7b85ca' stroke-width='1'/><rect x='7.6' y='10.6' width='4.8' height='8' fill='#e38a2a' stroke='#c46a18' stroke-width='.7'/><rect x='8.6' y='11.4' width='1.6' height='6.6' fill='#f4b860'/><path d='M0.8 10 L10 2.2 L19.4 10' fill='none' stroke='#66a226' stroke-width='3.2' stroke-linejoin='miter'/><path d='M1.4 9.4 L10 2.2 L18.8 9.4' fill='none' stroke='#92cc44' stroke-width='1.5'/></svg><svg style='left:136px;top:344.6px' width='21.0' height='20.0' viewBox='0 0 21 20'><rect x='14.4' y='2' width='2.8' height='5' fill='#d8dcf4' stroke='#8088cc' stroke-width='.8'/><path d='M3.2 8.2 L10 2.6 L16.8 8.2 V18.6 H3.2 Z' fill='#eef0fb' stroke='#7b85ca' stroke-width='1'/><rect x='7.6' y='10.6' width='4.8' height='8' fill='#e38a2a' stroke='#c46a18' stroke-width='.7'/><rect x='8.6' y='11.4' width='1.6' height='6.6' fill='#f4b860'/><path d='M0.8 10 L10 2.2 L19.4 10' fill='none' stroke='#66a226' stroke-width='3.2' stroke-linejoin='miter'/><path d='M1.4 9.4 L10 2.2 L18.8 9.4' fill='none' stroke='#92cc44' stroke-width='1.5'/></svg>
<div class='a' style='left:59px;top:496px;width:330px;height:418px;border:1px solid #b9b9b9;background:#fff'></div>
<div class='a' style='left:59px;top:496px;width:330px;height:41px;background:#06a6fa'></div>
<div class='t' style='left:89px;top:509.6px;font-weight:bold;color:#fff;font-size:13.75px;letter-spacing:.5px'>Joog</div>
<div class='a' style='left:326px;top:512px;width:12px;height:8px;border:1px solid #fff;border-top-width:2px'></div>
<svg style='left:65px;top:507.4px' width='18.0' height='17.0' viewBox='0 0 18 17'><defs><linearGradient id='gub' x1='0' y1='0' x2='0' y2='1'><stop offset='0' stop-color='#a4cc48'/><stop offset='1' stop-color='#6e9e22'/></linearGradient></defs><path d='M0.4 15.4 C0.4 11.2 4 10 9 10 C14 10 17.6 11.2 17.6 15.4 C13.6 16.8 4.4 16.8 0.4 15.4 Z' fill='url(#gub)' stroke='#5e8a1e' stroke-width='.6'/><ellipse cx='8.9' cy='6.2' rx='4.1' ry='5.4' fill='#f6d4a8' stroke='#c8905c' stroke-width='.5'/><path d='M4.4 7.2 C3 2.4 5.8 0.2 9.2 0.2 C12.8 0.2 14.8 2.8 13.4 7.2 C13.2 4.6 12.4 3.4 9 3.4 C6 3.4 4.8 4.6 4.4 7.2 Z' fill='#c26c2c'/></svg><svg style='left:363.8px;top:511.2px' width='10' height='11' viewBox='0 0 10 11'><rect x='2.4' y='0.6' width='5' height='5.6' fill='none' stroke='#ffffff' stroke-width='1.2'/><rect x='5' y='0.6' width='2.4' height='5.6' fill='#ffffff'/><rect x='0.4' y='6' width='9' height='1.6' fill='#ffffff'/><rect x='4.3' y='7.4' width='1.2' height='3.2' fill='#ffffff'/></svg>
<div class='t' style='left:64.5px;top:545.8px;color:#333;letter-spacing:0.28px'>kaarka #</div>
<div class='t' style='left:63px;top:575.8px;color:#333;letter-spacing:-0.23px'>Magaca oo b…</div>
<div class='a' style='left:164px;top:542px;width:142px;height:23px;border:1px solid #b5b5b5;background:#fff'></div>
<div class='a' style='left:167px;top:545px;width:1px;height:15px;background:#111'></div>
<div class='a' style='left:164px;top:572px;width:142px;height:23px;border:1px solid #b5b5b5;background:#fff'></div>
<div class='a' style='left:310px;top:539px;width:35px;height:57px;border:1px solid #d2d2d2;border-radius:4px;background:linear-gradient(#f6f6f6,#e2e2e2)'></div>
<svg style='left:315.6px;top:555.3px' width='26' height='26' viewBox='-9 -9 26 26'><defs><radialGradient id='gmg' cx='.4' cy='.3' r='.8'><stop offset='0' stop-color='#e8f6ff'/><stop offset='.6' stop-color='#9ccaf8'/><stop offset='1' stop-color='#5a98ea'/></radialGradient></defs><path d='M5.2 5.4 L12.6 12.3' stroke='#c88a18' stroke-width='4.4' stroke-linecap='round'/><path d='M5.2 5.4 L12.6 12.3' stroke='#f8c040' stroke-width='2.6' stroke-linecap='round'/><circle r='6.9' fill='url(#gmg)' stroke='#5a8ede' stroke-width='1.3'/><ellipse cx='-1' cy='-2.4' rx='4.3' ry='2.5' fill='#fff' opacity='.55'/></svg><svg style='left:356px;top:556px' width='22' height='24' viewBox='356 556 22 24'><defs><linearGradient id='glk' x1='0' y1='0' x2='0' y2='1'><stop offset='0' stop-color='#efdc7e'/><stop offset='1' stop-color='#c29a32'/></linearGradient></defs><path d='M361.8 567 V563.4 a5 5 0 0 1 10 0 V567' fill='none' stroke='#7e7e7e' stroke-width='2.8'/><path d='M361.8 567 V563.4 a5 5 0 0 1 10 0 V567' fill='none' stroke='#dcdcdc' stroke-width='1.2'/><rect x='358' y='566' width='16.8' height='11.6' rx='1.6' fill='url(#glk)' stroke='#a88628' stroke-width='.9'/></svg>
<div class='a' style='left:63px;top:600px;width:322px;height:278px;border:1px solid #a8a8a8;background:#fff'></div>
<div class='a hdr' style='left:64px;top:601px;width:320px;height:33px;border:1px solid #b4b4b4;border-top:2px solid #c9c9c9'></div>
<div class='a' style='left:238px;top:602px;width:1px;height:31px;background:#b4b4b4'></div>
<div class='a' style='left:325px;top:602px;width:1px;height:31px;background:#b4b4b4'></div>
<div class='t' style='left:66.5px;top:612px;color:#333;letter-spacing:-0.39px'>Macaamiisha - 0</div>
<div class='t' style='left:242px;top:612px;color:#333;letter-spacing:-0.28px'>Khariidad</div>
<div class='t' style='left:329.5px;top:612px;color:#333;letter-spacing:-0.77px'>Yimid</div>
<div class='a' style='left:63px;top:877px;width:322px;height:32px;border:1px solid #b9b9b9;background:#fff'></div>
<div class='a' style='left:63.0px;top:878px;width:61px;height:30px;border:1px solid #d0d0d0;border-radius:3px;background:linear-gradient(#f7f7f7,#e1e1e1)'></div>
<div class='a' style='left:124.2px;top:878px;width:61px;height:30px;border:1px solid #d0d0d0;border-radius:3px;background:linear-gradient(#f7f7f7,#e1e1e1)'></div>
<div class='a' style='left:185.4px;top:878px;width:61px;height:30px;border:1px solid #d0d0d0;border-radius:3px;background:linear-gradient(#f7f7f7,#e1e1e1)'></div>
<div class='a' style='left:246.6px;top:878px;width:61px;height:30px;border:1px solid #d0d0d0;border-radius:3px;background:linear-gradient(#f7f7f7,#e1e1e1)'></div>
<svg style='left:62px;top:878px' width='250' height='30' viewBox='62 878 250 30'><path d='M86.4 896 C85.2 893.6 84.6 891.6 85.8 891.2 C86.8 890.8 87.6 892 88.2 893.2 V886.4 a1.1 1.1 0 0 1 2.2 0 V884.8 a1.1 1.1 0 0 1 2.2 0 V885.6 a1.1 1.1 0 0 1 2.2 0 V887.4 a1.1 1.1 0 0 1 2.2 0 V896.6 C99 900.4 96.8 902.4 93.4 902.4 C89.8 902.4 87.8 899.8 86.4 896 Z' fill='#f2dbe2' stroke='#a293c9' stroke-width='1'/><path d='M90.4 886.6 V892 M92.6 885.2 V892 M94.8 886 V892' stroke='#a293c9' stroke-width='.8'/><circle cx='153.6' cy='893' r='10' fill='#4a86c4'/><circle cx='153.6' cy='888' r='1.7' fill='#fff'/><rect x='152.1' y='890.8' width='3' height='7.6' rx='.6' fill='#fff'/><path d='M206.6 901.2 L212.6 894.8' stroke='#5a6068' stroke-width='1.2'/><g transform='rotate(45 215 892)'><ellipse cx='215' cy='896.4' rx='5' ry='1.7' fill='#3fae54'/><path d='M212.8 888.6 H217.2 L217.8 896 H212.2 Z' fill='#4fc263'/><ellipse cx='215' cy='887.8' rx='4.4' ry='2.4' fill='#5fd474' stroke='#3fae54' stroke-width='.6'/></g><g transform='rotate(-28 276 893)'><path d='M267.6 899 C270 897 270.2 893.4 270.6 890.4 C271.2 886 273.2 884 276 884 C278.8 884 280.8 886 281.4 890.4 C281.8 893.4 282 897 284.4 899 Z' fill='#f4bc34' stroke='#d4982a' stroke-width='.8'/><path d='M272.4 890 C272.8 887.4 274 886 275.6 885.8' stroke='#fce08c' stroke-width='1.4' fill='none'/><ellipse cx='276' cy='900.6' rx='2.2' ry='1.7' fill='#d89a2c'/></g></svg>
<div class='a' style='left:399px;top:166px;width:398px;height:719px;border:1px solid #c6c6c6;background:#fff'></div>
<div class='a' style='left:400px;top:167px;width:375px;height:66px;background:#f6f6f6;border:1px solid #b6b6b6'></div>
<div class='a' style='left:401px;top:199px;width:373px;height:1px;background:#b6b6b6'></div>
<div class='a' style='left:523px;top:200px;width:1px;height:32px;background:#b6b6b6'></div>
<div class='a' style='left:573px;top:200px;width:1px;height:32px;background:#b6b6b6'></div>
<div class='a' style='left:623px;top:200px;width:1px;height:32px;background:#b6b6b6'></div>
<div class='t' style='left:574px;top:177.4px;font-size:13.75px;letter-spacing:-0.2px;color:#333'>1. Hool yar</div>
<div class='t' style='left:418px;top:210.3px;font-size:13.75px;letter-spacing:-0.1px;color:#333'>Taariikhda</div>
<div class='t' style='left:531px;top:210.3px;font-size:13.75px;letter-spacing:0.2px;color:#333'>Waqti</div>
<div class='t' style='left:579.5px;top:210.3px;font-size:13.75px;letter-spacing:-0.4px;color:#333'>Dadka</div>
<div class='t' style='left:693px;top:210.3px;font-size:13.75px;letter-spacing:-0.25px;color:#333'>Diiwaan</div>
<svg style='left:501.5px;top:214px' width='11' height='6'><path d='M0 6 L5.5 0 L11 6 Z' fill='#555'/></svg>
<div class='a' style='left:400px;top:233px;width:375px;height:631px;overflow:hidden;font-size:13.75px'>
<div class='a bl' style='left:0;top:0px;width:375px;height:34px'></div>
<div class='a' style='left:34px;top:0px;width:341px;height:34px;background:#0080c6'></div>
<div class='t' style='left:34px;top:2.3px;color:#00f0ff;letter-spacing:0.12px'>22.08.2024</div>
<div class='t' style='left:223.5px;top:2.3px;color:#00f0ff;letter-spacing:-0.2px'>Khamiis</div>
<svg style='left:8px;top:8.5px' width='18' height='18' viewBox='-9 -9 18 18'><circle r='7.4' fill='none' stroke='#3c3c3c' stroke-width='1.3'/><path d='M-3 -3 L2.6 2.6 M3 -2 V3 H-2' stroke='#3c3c3c' stroke-width='1.5' fill='none'/></svg>
<div class='a gr' style='left:0;top:34px;width:375px;height:60px'></div>
<div class='t' style='left:123.5px;top:36.6px;color:#808080;letter-spacing:0.12px'>07:00</div>
<div class='t' style='left:173.7px;top:36.6px;color:#808080;letter-spacing:0.12px'>0/0</div>
<div class='t' style='left:223.6px;top:36.6px;color:#808080;letter-spacing:-0.2px'>Barbie qoob ka ciyaarka</div>
<div class='t' style='left:223.6px;top:53.0px;color:#808080;letter-spacing:-0.2px'>Shaqaalaha 1</div>
<div class='t' style='left:223.6px;top:69.4px;color:#808080;letter-spacing:-0.2px'>Koox: Children</div>
<svg style='left:71.0px;top:54.0px;overflow:hidden' width='24' height='20' viewBox='-12 -10 24 20'><g style='filter:blur(.35px);opacity:.9'>
<ellipse cx='0.3' cy='-5.8' rx='1.9' ry='2.3' fill='#5a3a2e'/>
<rect x='-1.3' y='-4.6' width='2.8' height='6' rx='1.2' fill='#e2a27a'/>
<rect x='-1.5' y='-3.7' width='3.2' height='1.5' rx='.6' fill='#e8484c'/>
<rect x='-0.8' y='6' width='1.6' height='3' fill='#eec0a0' opacity='.8'/>
<rect x='-2.1' y='1' width='4.4' height='5.8' rx='1.6' fill='#f0484e'/>
</g></svg>
<div class='a bl' style='left:0;top:94px;width:375px;height:60px'></div>
<div class='t' style='left:123.5px;top:96.6px;color:#808080;letter-spacing:0.12px'>08:00</div>
<div class='t' style='left:173.7px;top:96.6px;color:#808080;letter-spacing:0.12px'>0/0</div>
<div class='t' style='left:223.6px;top:96.6px;color:#808080;letter-spacing:-0.2px'>Barbie qoob ka ciyaarka</div>
<div class='t' style='left:223.6px;top:113.0px;color:#808080;letter-spacing:-0.2px'>Shaqaalaha 1</div>
<div class='t' style='left:223.6px;top:129.4px;color:#808080;letter-spacing:-0.2px'>Koox: Children</div>
<svg style='left:71.0px;top:114.0px;overflow:hidden' width='24' height='20' viewBox='-12 -10 24 20'><g style='filter:blur(.35px);opacity:.9'>
<ellipse cx='0.3' cy='-5.8' rx='1.9' ry='2.3' fill='#5a3a2e'/>
<rect x='-1.3' y='-4.6' width='2.8' height='6' rx='1.2' fill='#e2a27a'/>
<rect x='-1.5' y='-3.7' width='3.2' height='1.5' rx='.6' fill='#e8484c'/>
<rect x='-0.8' y='6' width='1.6' height='3' fill='#eec0a0' opacity='.8'/>
<rect x='-2.1' y='1' width='4.4' height='5.8' rx='1.6' fill='#f0484e'/>
</g></svg>
<div class='a gr' style='left:0;top:154px;width:375px;height:60px'></div>
<div class='a ye' style='left:123px;top:154px;width:252px;height:60px'></div>
<div class='t' style='left:123.5px;top:156.6px;color:#000;letter-spacing:0.12px'>09:00</div>
<div class='t' style='left:173.7px;top:156.6px;color:#000;letter-spacing:0.12px'>0/1</div>
<div class='t' style='left:223.6px;top:156.6px;color:#000;letter-spacing:-0.2px'>Barbie qoob ka ciyaarka</div>
<div class='t' style='left:223.6px;top:173.0px;color:#000;letter-spacing:-0.2px'>Shaqaalaha 1</div>
<div class='t' style='left:223.6px;top:189.4px;color:#000;letter-spacing:-0.2px'>Koox: Children</div>
<svg style='left:71.0px;top:174.0px;overflow:hidden' width='24' height='20' viewBox='-12 -10 24 20'><g style='filter:blur(.35px);opacity:.9'>
<ellipse cx='0.3' cy='-5.8' rx='1.9' ry='2.3' fill='#5a3a2e'/>
<rect x='-1.3' y='-4.6' width='2.8' height='6' rx='1.2' fill='#e2a27a'/>
<rect x='-1.5' y='-3.7' width='3.2' height='1.5' rx='.6' fill='#e8484c'/>
<rect x='-0.8' y='6' width='1.6' height='3' fill='#eec0a0' opacity='.8'/>
<rect x='-2.1' y='1' width='4.4' height='5.8' rx='1.6' fill='#f0484e'/>
</g></svg>
<div class='a bl' style='left:0;top:214px;width:375px;height:20px'></div>
<div class='a ye' style='left:123px;top:214px;width:252px;height:20px'></div>
<div class='t' style='left:123.5px;top:216.6px;color:#000;letter-spacing:0.12px'>10:00</div>
<div class='t' style='left:173.7px;top:216.6px;color:#000;letter-spacing:0.12px'>0/1</div>
<div class='t' style='left:223.6px;top:216.6px;color:#000;letter-spacing:-0.2px'>Qoob ka ciyaarka casriga</div>
<svg style='left:71.0px;top:214.0px;overflow:hidden' width='24' height='20' viewBox='-12 -10 24 20'><g style='filter:blur(.35px);opacity:.9'>
<path d='M-6.2 6.8 L-3 5.2 L1 6.2 L0.5 7.2 Z' fill='#4a4a4a' opacity='.75'/>
<path d='M0.6 -3 L4.6 -3.2 L5.2 7.3 L0 7.3 L-2.6 6.4 Z' fill='#e0242a'/>
<path d='M4.2 -5 L6.4 -5 L7.2 7.3 L5 7.3 Z' fill='#32343c'/>
<rect x='5.5' y='-8' width='2.6' height='4.6' rx='1' fill='#d4d8dc'/>
<ellipse cx='3.2' cy='-7' rx='1.8' ry='1.7' fill='#3a3636'/>
<ellipse cx='-0.6' cy='-5' rx='1.8' ry='1.7' fill='#8a4a30'/>
<path d='M0.5 -4.5 L3.5 -5 L3.8 -2.6 L1 -2.6 Z' fill='#e8b898'/>
</g></svg>
<div class='a gr' style='left:0;top:234px;width:375px;height:20px'></div>
<div class='t' style='left:123.5px;top:236.6px;color:#808080;letter-spacing:0.12px'>11:00</div>
<div class='t' style='left:173.7px;top:236.6px;color:#808080;letter-spacing:0.12px'>0/0</div>
<div class='t' style='left:223.6px;top:236.6px;color:#808080;letter-spacing:-0.2px'>Qoob ka ciyaarka casriga</div>
<svg style='left:71.0px;top:234.0px;overflow:hidden' width='24' height='20' viewBox='-12 -10 24 20'><g style='filter:blur(.35px);opacity:.9'>
<path d='M-6.2 6.8 L-3 5.2 L1 6.2 L0.5 7.2 Z' fill='#4a4a4a' opacity='.75'/>
<path d='M0.6 -3 L4.6 -3.2 L5.2 7.3 L0 7.3 L-2.6 6.4 Z' fill='#e0242a'/>
<path d='M4.2 -5 L6.4 -5 L7.2 7.3 L5 7.3 Z' fill='#32343c'/>
<rect x='5.5' y='-8' width='2.6' height='4.6' rx='1' fill='#d4d8dc'/>
<ellipse cx='3.2' cy='-7' rx='1.8' ry='1.7' fill='#3a3636'/>
<ellipse cx='-0.6' cy='-5' rx='1.8' ry='1.7' fill='#8a4a30'/>
<path d='M0.5 -4.5 L3.5 -5 L3.8 -2.6 L1 -2.6 Z' fill='#e8b898'/>
</g></svg>
<div class='a bl' style='left:0;top:254px;width:375px;height:20px'></div>
<div class='t' style='left:123.5px;top:256.6px;color:#808080;letter-spacing:0.12px'>12:00</div>
<div class='t' style='left:173.7px;top:256.6px;color:#808080;letter-spacing:0.12px'>0/0</div>
<div class='t' style='left:223.6px;top:256.6px;color:#808080;letter-spacing:-0.2px'>Qoob ka ciyaarka casriga</div>
<svg style='left:71.0px;top:254.0px;overflow:hidden' width='24' height='20' viewBox='-12 -10 24 20'><g style='filter:blur(.35px);opacity:.9'>
<path d='M-6.2 6.8 L-3 5.2 L1 6.2 L0.5 7.2 Z' fill='#4a4a4a' opacity='.75'/>
<path d='M0.6 -3 L4.6 -3.2 L5.2 7.3 L0 7.3 L-2.6 6.4 Z' fill='#e0242a'/>
<path d='M4.2 -5 L6.4 -5 L7.2 7.3 L5 7.3 Z' fill='#32343c'/>
<rect x='5.5' y='-8' width='2.6' height='4.6' rx='1' fill='#d4d8dc'/>
<ellipse cx='3.2' cy='-7' rx='1.8' ry='1.7' fill='#3a3636'/>
<ellipse cx='-0.6' cy='-5' rx='1.8' ry='1.7' fill='#8a4a30'/>
<path d='M0.5 -4.5 L3.5 -5 L3.8 -2.6 L1 -2.6 Z' fill='#e8b898'/>
</g></svg>
<div class='a gr' style='left:0;top:274px;width:375px;height:20px'></div>
<div class='t' style='left:123.5px;top:276.6px;color:#808080;letter-spacing:0.12px'>13:00</div>
<div class='t' style='left:173.7px;top:276.6px;color:#808080;letter-spacing:0.12px'>0/0</div>
<div class='t' style='left:223.6px;top:276.6px;color:#808080;letter-spacing:-0.2px'>Qoob ka ciyaarka casriga</div>
<svg style='left:71.0px;top:274.0px;overflow:hidden' width='24' height='20' viewBox='-12 -10 24 20'><g style='filter:blur(.35px);opacity:.9'>
<path d='M-6.2 6.8 L-3 5.2 L1 6.2 L0.5 7.2 Z' fill='#4a4a4a' opacity='.75'/>
<path d='M0.6 -3 L4.6 -3.2 L5.2 7.3 L0 7.3 L-2.6 6.4 Z' fill='#e0242a'/>
<path d='M4.2 -5 L6.4 -5 L7.2 7.3 L5 7.3 Z' fill='#32343c'/>
<rect x='5.5' y='-8' width='2.6' height='4.6' rx='1' fill='#d4d8dc'/>
<ellipse cx='3.2' cy='-7' rx='1.8' ry='1.7' fill='#3a3636'/>
<ellipse cx='-0.6' cy='-5' rx='1.8' ry='1.7' fill='#8a4a30'/>
<path d='M0.5 -4.5 L3.5 -5 L3.8 -2.6 L1 -2.6 Z' fill='#e8b898'/>
</g></svg>
<div class='a bl' style='left:0;top:294px;width:375px;height:20px'></div>
<div class='t' style='left:123.5px;top:296.6px;color:#808080;letter-spacing:0.12px'>14:00</div>
<div class='t' style='left:173.7px;top:296.6px;color:#808080;letter-spacing:0.12px'>0/0</div>
<div class='t' style='left:223.6px;top:296.6px;color:#808080;letter-spacing:-0.2px'>Qoob ka ciyaarka casriga</div>
<svg style='left:71.0px;top:294.0px;overflow:hidden' width='24' height='20' viewBox='-12 -10 24 20'><g style='filter:blur(.35px);opacity:.9'>
<path d='M-6.2 6.8 L-3 5.2 L1 6.2 L0.5 7.2 Z' fill='#4a4a4a' opacity='.75'/>
<path d='M0.6 -3 L4.6 -3.2 L5.2 7.3 L0 7.3 L-2.6 6.4 Z' fill='#e0242a'/>
<path d='M4.2 -5 L6.4 -5 L7.2 7.3 L5 7.3 Z' fill='#32343c'/>
<rect x='5.5' y='-8' width='2.6' height='4.6' rx='1' fill='#d4d8dc'/>
<ellipse cx='3.2' cy='-7' rx='1.8' ry='1.7' fill='#3a3636'/>
<ellipse cx='-0.6' cy='-5' rx='1.8' ry='1.7' fill='#8a4a30'/>
<path d='M0.5 -4.5 L3.5 -5 L3.8 -2.6 L1 -2.6 Z' fill='#e8b898'/>
</g></svg>
<div class='a gr' style='left:0;top:314px;width:375px;height:40px'></div>
<div class='t' style='left:123.5px;top:316.6px;color:#808080;letter-spacing:0.12px'>15:00</div>
<div class='t' style='left:173.7px;top:316.6px;color:#808080;letter-spacing:0.12px'>0/0</div>
<div class='t' style='left:223.6px;top:316.6px;color:#808080;letter-spacing:-0.2px'>Qoob ka ciyaarka</div>
<div class='t' style='left:223.6px;top:333.0px;color:#808080;letter-spacing:-0.2px'>Shaqaalaha 5</div>
<svg style='left:71.0px;top:324.0px;overflow:hidden' width='24' height='20' viewBox='-12 -10 24 20'><g style='filter:blur(.35px);opacity:.9'>
<ellipse cx='-4.1' cy='-5.6' rx='1.6' ry='1.9' fill='#5c3a44'/>
<path d='M-4.6 -3.8 L-2.4 -4 L0.4 2.2 L-3.2 2.6 Z' fill='#9a4648'/>
<path d='M-3.6 -0.6 L-0.6 -0.8 L0.2 2.4 L-3.2 2.6 Z' fill='#56689a'/>
<path d='M-2.4 2.4 L0.6 2.2 L0.2 9.4 L-3.2 9.6 Z' fill='#6c7076'/>
<rect x='-6' y='3.2' width='2.2' height='1.8' fill='#7a9a86' opacity='.8'/>
<ellipse cx='2.2' cy='-5.8' rx='1.5' ry='1.9' fill='#e2b04a'/>
<path d='M1.4 -7.6 L3 -7.8 L2.4 -6.8 Z' fill='#2a9a58'/>
<path d='M1.6 -4.2 L3.4 -4.2 L8.4 1.2 L0.2 1.4 Z' fill='#27a256'/>
<path d='M-1.6 -2.8 L1.4 -3.6' stroke='#e8c4a8' stroke-width='1'/>
</g></svg>
<div class='a bl' style='left:0;top:354px;width:375px;height:40px'></div>
<div class='t' style='left:123.5px;top:356.6px;color:#808080;letter-spacing:0.12px'>16:00</div>
<div class='t' style='left:173.7px;top:356.6px;color:#808080;letter-spacing:0.12px'>0/0</div>
<div class='t' style='left:223.6px;top:356.6px;color:#808080;letter-spacing:-0.2px'>Qoob ka ciyaarka</div>
<div class='t' style='left:223.6px;top:373.0px;color:#808080;letter-spacing:-0.2px'>Shaqaalaha 5</div>
<svg style='left:71.0px;top:364.0px;overflow:hidden' width='24' height='20' viewBox='-12 -10 24 20'><g style='filter:blur(.35px);opacity:.9'>
<ellipse cx='-4.1' cy='-5.6' rx='1.6' ry='1.9' fill='#5c3a44'/>
<path d='M-4.6 -3.8 L-2.4 -4 L0.4 2.2 L-3.2 2.6 Z' fill='#9a4648'/>
<path d='M-3.6 -0.6 L-0.6 -0.8 L0.2 2.4 L-3.2 2.6 Z' fill='#56689a'/>
<path d='M-2.4 2.4 L0.6 2.2 L0.2 9.4 L-3.2 9.6 Z' fill='#6c7076'/>
<rect x='-6' y='3.2' width='2.2' height='1.8' fill='#7a9a86' opacity='.8'/>
<ellipse cx='2.2' cy='-5.8' rx='1.5' ry='1.9' fill='#e2b04a'/>
<path d='M1.4 -7.6 L3 -7.8 L2.4 -6.8 Z' fill='#2a9a58'/>
<path d='M1.6 -4.2 L3.4 -4.2 L8.4 1.2 L0.2 1.4 Z' fill='#27a256'/>
<path d='M-1.6 -2.8 L1.4 -3.6' stroke='#e8c4a8' stroke-width='1'/>
</g></svg>
<div class='a gr' style='left:0;top:394px;width:375px;height:40px'></div>
<div class='t' style='left:123.5px;top:396.6px;color:#808080;letter-spacing:0.12px'>17:00</div>
<div class='t' style='left:173.7px;top:396.6px;color:#808080;letter-spacing:0.12px'>0/0</div>
<div class='t' style='left:223.6px;top:396.6px;color:#808080;letter-spacing:-0.2px'>Qoob ka ciyaarka</div>
<div class='t' style='left:223.6px;top:413.0px;color:#808080;letter-spacing:-0.2px'>Shaqaalaha 5</div>
<svg style='left:71.0px;top:404.0px;overflow:hidden' width='24' height='20' viewBox='-12 -10 24 20'><g style='filter:blur(.35px);opacity:.9'>
<ellipse cx='-4.1' cy='-5.6' rx='1.6' ry='1.9' fill='#5c3a44'/>
<path d='M-4.6 -3.8 L-2.4 -4 L0.4 2.2 L-3.2 2.6 Z' fill='#9a4648'/>
<path d='M-3.6 -0.6 L-0.6 -0.8 L0.2 2.4 L-3.2 2.6 Z' fill='#56689a'/>
<path d='M-2.4 2.4 L0.6 2.2 L0.2 9.4 L-3.2 9.6 Z' fill='#6c7076'/>
<rect x='-6' y='3.2' width='2.2' height='1.8' fill='#7a9a86' opacity='.8'/>
<ellipse cx='2.2' cy='-5.8' rx='1.5' ry='1.9' fill='#e2b04a'/>
<path d='M1.4 -7.6 L3 -7.8 L2.4 -6.8 Z' fill='#2a9a58'/>
<path d='M1.6 -4.2 L3.4 -4.2 L8.4 1.2 L0.2 1.4 Z' fill='#27a256'/>
<path d='M-1.6 -2.8 L1.4 -3.6' stroke='#e8c4a8' stroke-width='1'/>
</g></svg>
<div class='a bl' style='left:0;top:434px;width:375px;height:20px'></div>
<div class='a ye' style='left:123px;top:434px;width:252px;height:20px'></div>
<div class='t' style='left:123.5px;top:436.6px;color:#000;letter-spacing:0.12px'>18:00</div>
<div class='t' style='left:173.7px;top:436.6px;color:#000;letter-spacing:0.12px'>0/1</div>
<div class='t' style='left:223.6px;top:436.6px;color:#000;letter-spacing:-0.2px'>Ciyaaraha Hip-hop</div>
<svg style='left:71.0px;top:434.0px;overflow:hidden' width='24' height='20' viewBox='-12 -10 24 20'><g style='filter:blur(.35px);opacity:.9'>
<circle cx='-4' cy='-6.1' r='1.8' fill='#f8b088'/>
<path d='M-4.4 -4.4 L-2 -4.6 L0.4 -8.6 L1.6 -7.8 L-1 -2.6 L-1.6 1.4 L-6.2 1.4 L-9 0.6 L-7 -3.4 Z' fill='#3ba686'/>
<path d='M-5.4 1.2 L-2 1.2 L0.4 8.4 L-1.8 8.6 L-3.8 3.4 L-5.2 8.6 L-7.4 8.4 Z' fill='#2e4662'/>
<circle cx='5.9' cy='-5.8' r='1.8' fill='#f4b890'/>
<path d='M1.8 -8.4 L3.2 -8.8 L5 -4.4 L7.2 -4.4 L9.6 -8.8 L10.8 -8.2 L8.6 -3 L8.4 1.4 L4.2 1.4 L3.8 -3.2 Z' fill='#da4a30'/>
<path d='M4.4 1.2 L8.2 1.2 L9.4 8.4 L7.4 8.6 L6.2 3.2 L3.4 8.6 L1.4 8.2 Z' fill='#30465e'/>
</g></svg>
<div class='a gr' style='left:0;top:454px;width:375px;height:20px'></div>
<div class='t' style='left:123.5px;top:456.6px;color:#808080;letter-spacing:0.12px'>19:00</div>
<div class='t' style='left:173.7px;top:456.6px;color:#808080;letter-spacing:0.12px'>0/0</div>
<div class='t' style='left:223.6px;top:456.6px;color:#808080;letter-spacing:-0.2px'>Ciyaaraha Hip-hop</div>
<svg style='left:71.0px;top:454.0px;overflow:hidden' width='24' height='20' viewBox='-12 -10 24 20'><g style='filter:blur(.35px);opacity:.9'>
<circle cx='-4' cy='-6.1' r='1.8' fill='#f8b088'/>
<path d='M-4.4 -4.4 L-2 -4.6 L0.4 -8.6 L1.6 -7.8 L-1 -2.6 L-1.6 1.4 L-6.2 1.4 L-9 0.6 L-7 -3.4 Z' fill='#3ba686'/>
<path d='M-5.4 1.2 L-2 1.2 L0.4 8.4 L-1.8 8.6 L-3.8 3.4 L-5.2 8.6 L-7.4 8.4 Z' fill='#2e4662'/>
<circle cx='5.9' cy='-5.8' r='1.8' fill='#f4b890'/>
<path d='M1.8 -8.4 L3.2 -8.8 L5 -4.4 L7.2 -4.4 L9.6 -8.8 L10.8 -8.2 L8.6 -3 L8.4 1.4 L4.2 1.4 L3.8 -3.2 Z' fill='#da4a30'/>
<path d='M4.4 1.2 L8.2 1.2 L9.4 8.4 L7.4 8.6 L6.2 3.2 L3.4 8.6 L1.4 8.2 Z' fill='#30465e'/>
</g></svg>
<div class='a bl' style='left:0;top:474px;width:375px;height:20px'></div>
<div class='t' style='left:123.5px;top:476.6px;color:#808080;letter-spacing:0.12px'>20:00</div>
<div class='t' style='left:173.7px;top:476.6px;color:#808080;letter-spacing:0.12px'>0/0</div>
<div class='t' style='left:223.6px;top:476.6px;color:#808080;letter-spacing:-0.2px'>Ciyaaraha Hip-hop</div>
<svg style='left:71.0px;top:474.0px;overflow:hidden' width='24' height='20' viewBox='-12 -10 24 20'><g style='filter:blur(.35px);opacity:.9'>
<circle cx='-4' cy='-6.1' r='1.8' fill='#f8b088'/>
<path d='M-4.4 -4.4 L-2 -4.6 L0.4 -8.6 L1.6 -7.8 L-1 -2.6 L-1.6 1.4 L-6.2 1.4 L-9 0.6 L-7 -3.4 Z' fill='#3ba686'/>
<path d='M-5.4 1.2 L-2 1.2 L0.4 8.4 L-1.8 8.6 L-3.8 3.4 L-5.2 8.6 L-7.4 8.4 Z' fill='#2e4662'/>
<circle cx='5.9' cy='-5.8' r='1.8' fill='#f4b890'/>
<path d='M1.8 -8.4 L3.2 -8.8 L5 -4.4 L7.2 -4.4 L9.6 -8.8 L10.8 -8.2 L8.6 -3 L8.4 1.4 L4.2 1.4 L3.8 -3.2 Z' fill='#da4a30'/>
<path d='M4.4 1.2 L8.2 1.2 L9.4 8.4 L7.4 8.6 L6.2 3.2 L3.4 8.6 L1.4 8.2 Z' fill='#30465e'/>
</g></svg>
<div class='a gr' style='left:0;top:494px;width:375px;height:34px'></div>
<div class='a' style='left:34px;top:494px;width:341px;height:34px;background:#0080c6'></div>
<div class='t' style='left:34px;top:496.3px;color:#fff;letter-spacing:0.12px'>23.08.2024</div>
<div class='t' style='left:223.5px;top:496.3px;color:#fff;letter-spacing:-0.2px'>Jimcaha</div>
<svg style='left:8px;top:502.5px' width='18' height='18' viewBox='-9 -9 18 18'><circle r='7.4' fill='none' stroke='#3c3c3c' stroke-width='1.3'/><path d='M-3 -3 L2.6 2.6 M3 -2 V3 H-2' stroke='#3c3c3c' stroke-width='1.5' fill='none'/></svg>
<div class='a bl' style='left:0;top:528px;width:375px;height:60px'></div>
<div class='t' style='left:123.5px;top:530.6px;color:#808080;letter-spacing:0.12px'>07:00</div>
<div class='t' style='left:173.7px;top:530.6px;color:#808080;letter-spacing:0.12px'>0/0</div>
<div class='t' style='left:223.6px;top:530.6px;color:#808080;letter-spacing:-0.2px'>Barbie qoob ka ciyaarka</div>
<div class='t' style='left:223.6px;top:547.0px;color:#808080;letter-spacing:-0.2px'>Shaqaalaha 1</div>
<div class='t' style='left:223.6px;top:563.4px;color:#808080;letter-spacing:-0.2px'>Koox: Children</div>
<svg style='left:71.0px;top:548.0px;overflow:hidden' width='24' height='20' viewBox='-12 -10 24 20'><g style='filter:blur(.35px);opacity:.9'>
<ellipse cx='0.3' cy='-5.8' rx='1.9' ry='2.3' fill='#5a3a2e'/>
<rect x='-1.3' y='-4.6' width='2.8' height='6' rx='1.2' fill='#e2a27a'/>
<rect x='-1.5' y='-3.7' width='3.2' height='1.5' rx='.6' fill='#e8484c'/>
<rect x='-0.8' y='6' width='1.6' height='3' fill='#eec0a0' opacity='.8'/>
<rect x='-2.1' y='1' width='4.4' height='5.8' rx='1.6' fill='#f0484e'/>
</g></svg>
<div class='a gr' style='left:0;top:588px;width:375px;height:60px'></div>
<div class='t' style='left:123.5px;top:590.6px;color:#808080;letter-spacing:0.12px'>08:00</div>
<div class='t' style='left:173.7px;top:590.6px;color:#808080;letter-spacing:0.12px'>0/0</div>
<div class='t' style='left:223.6px;top:590.6px;color:#808080;letter-spacing:-0.2px'>Barbie qoob ka ciyaarka</div>
<div class='t' style='left:223.6px;top:607.0px;color:#808080;letter-spacing:-0.2px'>Shaqaalaha 1</div>
<div class='t' style='left:223.6px;top:623.4px;color:#808080;letter-spacing:-0.2px'>Koox: Children</div>
<svg style='left:71.0px;top:608.0px;overflow:hidden' width='24' height='20' viewBox='-12 -10 24 20'><g style='filter:blur(.35px);opacity:.9'>
<ellipse cx='0.3' cy='-5.8' rx='1.9' ry='2.3' fill='#5a3a2e'/>
<rect x='-1.3' y='-4.6' width='2.8' height='6' rx='1.2' fill='#e2a27a'/>
<rect x='-1.5' y='-3.7' width='3.2' height='1.5' rx='.6' fill='#e8484c'/>
<rect x='-0.8' y='6' width='1.6' height='3' fill='#eec0a0' opacity='.8'/>
<rect x='-2.1' y='1' width='4.4' height='5.8' rx='1.6' fill='#f0484e'/>
</g></svg>
</div>
<svg style='left:781.2px;top:175.2px' width='8' height='4'><path d='M0 4 L3.8 0 L7.6 4 Z' fill='#8a8a8a'/></svg>
<div class='a' style='left:780px;top:188px;width:10px;height:416px;background:#b9b9b9'></div>
<svg style='left:781.2px;top:850px' width='8' height='4'><path d='M0 0 L3.8 4 L7.6 0 Z' fill='#8a8a8a'/></svg>
<div class='a' style='left:400px;top:864px;width:375px;height:1px;background:#c0c0c0'></div>
<div class='a' style='left:775px;top:167px;width:1px;height:698px;background:#c0c0c0'></div>
<div class='a' style='left:421px;top:869px;width:301px;height:10px;background:#b9b9b9'></div>
<svg style='left:409.6px;top:870.6px' width='4' height='8'><path d='M4 0 L0 3.7 L4 7.4 Z' fill='#8a8a8a'/></svg>
<svg style='left:761.6px;top:870.6px' width='4' height='8'><path d='M0 0 L4 3.7 L0 7.4 Z' fill='#8a8a8a'/></svg>
<div class='a' style='left:804px;top:166px;width:398px;height:719px;border:1px solid #c6c6c6;background:#fff'></div>
<div class='a' style='left:805px;top:167px;width:375px;height:66px;background:#f6f6f6;border:1px solid #b6b6b6'></div>
<div class='a' style='left:806px;top:199px;width:373px;height:1px;background:#b6b6b6'></div>
<div class='a' style='left:928px;top:200px;width:1px;height:32px;background:#b6b6b6'></div>
<div class='a' style='left:978px;top:200px;width:1px;height:32px;background:#b6b6b6'></div>
<div class='a' style='left:1028px;top:200px;width:1px;height:32px;background:#b6b6b6'></div>
<div class='t' style='left:964px;top:177.4px;font-size:13.75px;letter-spacing:-0.2px;color:#333'>2. Hoolka weyn</div>
<div class='t' style='left:823px;top:210.3px;font-size:13.75px;letter-spacing:-0.1px;color:#333'>Taariikhda</div>
<div class='t' style='left:936px;top:210.3px;font-size:13.75px;letter-spacing:0.2px;color:#333'>Waqti</div>
<div class='t' style='left:984.5px;top:210.3px;font-size:13.75px;letter-spacing:-0.4px;color:#333'>Dadka</div>
<div class='t' style='left:1098px;top:210.3px;font-size:13.75px;letter-spacing:-0.25px;color:#333'>Diiwaan</div>
<svg style='left:906.5px;top:214px' width='11' height='6'><path d='M0 6 L5.5 0 L11 6 Z' fill='#555'/></svg>
<div class='a' style='left:805px;top:233px;width:375px;height:631px;overflow:hidden;font-size:13.75px'>
<div class='a bl' style='left:0;top:0px;width:375px;height:34px'></div>
<div class='a' style='left:34px;top:0px;width:341px;height:34px;background:#0080c6'></div>
<div class='t' style='left:34px;top:2.3px;color:#00f0ff;letter-spacing:0.12px'>22.08.2024</div>
<div class='t' style='left:223.5px;top:2.3px;color:#00f0ff;letter-spacing:-0.2px'>Khamiis</div>
<svg style='left:8px;top:8.5px' width='18' height='18' viewBox='-9 -9 18 18'><circle r='7.4' fill='none' stroke='#3c3c3c' stroke-width='1.3'/><path d='M-3 -3 L2.6 2.6 M3 -2 V3 H-2' stroke='#3c3c3c' stroke-width='1.5' fill='none'/></svg>
<div class='a gr' style='left:0;top:34px;width:375px;height:20px'></div>
<div class='t' style='left:123.5px;top:36.6px;color:#808080;letter-spacing:0.12px'>08:00</div>
<div class='t' style='left:173.7px;top:36.6px;color:#808080;letter-spacing:0.12px'>0/0</div>
<div class='t' style='left:223.6px;top:36.6px;color:#808080;letter-spacing:-0.2px'>Qoob ka ciyaarka Krump</div>
<svg style='left:71.0px;top:34.0px;overflow:hidden' width='24' height='20' viewBox='-12 -10 24 20'><g style='filter:blur(.35px);opacity:.9'>
<path d='M1.8 -1.8 L4.6 -2.4 L6.2 7.1 L-7.6 7.1 C-3.6 5.4 0.2 1.8 1.8 -1.8 Z' fill='#1f9be0'/>
<path d='M4.2 -3.6 L6.2 -3.4 L6.8 7.2 L5 7.2 Z' fill='#3a3032'/>
<path d='M5 6.4 L7.2 6.4 L7.2 7.4 L3.4 7.4 Z' fill='#2a2a2e'/>
<path d='M5.4 -4 L9.2 -5.4' stroke='#d8c4b0' stroke-width='1.2'/>
<ellipse cx='0.4' cy='-5' rx='1.6' ry='1.9' fill='#7a3e22'/>
<ellipse cx='3.3' cy='-6.5' rx='1.6' ry='1.7' fill='#c09a70'/>
<path d='M0.8 -3.4 L4 -4 L4 -1.8 L1.6 -1.4 Z' fill='#e4b490'/>
</g></svg>
<div class='a bl' style='left:0;top:54px;width:375px;height:20px'></div>
<div class='t' style='left:123.5px;top:56.6px;color:#808080;letter-spacing:0.12px'>09:00</div>
<div class='t' style='left:173.7px;top:56.6px;color:#808080;letter-spacing:0.12px'>0/0</div>
<div class='t' style='left:223.6px;top:56.6px;color:#808080;letter-spacing:-0.2px'>Qoob ka ciyaarka Krump</div>
<svg style='left:71.0px;top:54.0px;overflow:hidden' width='24' height='20' viewBox='-12 -10 24 20'><g style='filter:blur(.35px);opacity:.9'>
<path d='M1.8 -1.8 L4.6 -2.4 L6.2 7.1 L-7.6 7.1 C-3.6 5.4 0.2 1.8 1.8 -1.8 Z' fill='#1f9be0'/>
<path d='M4.2 -3.6 L6.2 -3.4 L6.8 7.2 L5 7.2 Z' fill='#3a3032'/>
<path d='M5 6.4 L7.2 6.4 L7.2 7.4 L3.4 7.4 Z' fill='#2a2a2e'/>
<path d='M5.4 -4 L9.2 -5.4' stroke='#d8c4b0' stroke-width='1.2'/>
<ellipse cx='0.4' cy='-5' rx='1.6' ry='1.9' fill='#7a3e22'/>
<ellipse cx='3.3' cy='-6.5' rx='1.6' ry='1.7' fill='#c09a70'/>
<path d='M0.8 -3.4 L4 -4 L4 -1.8 L1.6 -1.4 Z' fill='#e4b490'/>
</g></svg>
<div class='a gr' style='left:0;top:74px;width:375px;height:20px'></div>
<div class='a ye' style='left:123px;top:74px;width:252px;height:20px'></div>
<div class='t' style='left:123.5px;top:76.6px;color:#000;letter-spacing:0.12px'>10:00</div>
<div class='t' style='left:173.7px;top:76.6px;color:#000;letter-spacing:0.12px'>0/2</div>
<div class='t' style='left:223.6px;top:76.6px;color:#000;letter-spacing:-0.2px'>Qoob ka ciyaarka Krump</div>
<svg style='left:71.0px;top:74.0px;overflow:hidden' width='24' height='20' viewBox='-12 -10 24 20'><g style='filter:blur(.35px);opacity:.9'>
<path d='M1.8 -1.8 L4.6 -2.4 L6.2 7.1 L-7.6 7.1 C-3.6 5.4 0.2 1.8 1.8 -1.8 Z' fill='#1f9be0'/>
<path d='M4.2 -3.6 L6.2 -3.4 L6.8 7.2 L5 7.2 Z' fill='#3a3032'/>
<path d='M5 6.4 L7.2 6.4 L7.2 7.4 L3.4 7.4 Z' fill='#2a2a2e'/>
<path d='M5.4 -4 L9.2 -5.4' stroke='#d8c4b0' stroke-width='1.2'/>
<ellipse cx='0.4' cy='-5' rx='1.6' ry='1.9' fill='#7a3e22'/>
<ellipse cx='3.3' cy='-6.5' rx='1.6' ry='1.7' fill='#c09a70'/>
<path d='M0.8 -3.4 L4 -4 L4 -1.8 L1.6 -1.4 Z' fill='#e4b490'/>
</g></svg>
<div class='a bl' style='left:0;top:94px;width:375px;height:20px'></div>
<div class='t' style='left:123.5px;top:96.6px;color:#808080;letter-spacing:0.12px'>11:00</div>
<div class='t' style='left:173.7px;top:96.6px;color:#808080;letter-spacing:0.12px'>0/0</div>
<div class='t' style='left:223.6px;top:96.6px;color:#808080;letter-spacing:-0.2px'>Qoob ka ciyaarka Krump</div>
<svg style='left:71.0px;top:94.0px;overflow:hidden' width='24' height='20' viewBox='-12 -10 24 20'><g style='filter:blur(.35px);opacity:.9'>
<path d='M1.8 -1.8 L4.6 -2.4 L6.2 7.1 L-7.6 7.1 C-3.6 5.4 0.2 1.8 1.8 -1.8 Z' fill='#1f9be0'/>
<path d='M4.2 -3.6 L6.2 -3.4 L6.8 7.2 L5 7.2 Z' fill='#3a3032'/>
<path d='M5 6.4 L7.2 6.4 L7.2 7.4 L3.4 7.4 Z' fill='#2a2a2e'/>
<path d='M5.4 -4 L9.2 -5.4' stroke='#d8c4b0' stroke-width='1.2'/>
<ellipse cx='0.4' cy='-5' rx='1.6' ry='1.9' fill='#7a3e22'/>
<ellipse cx='3.3' cy='-6.5' rx='1.6' ry='1.7' fill='#c09a70'/>
<path d='M0.8 -3.4 L4 -4 L4 -1.8 L1.6 -1.4 Z' fill='#e4b490'/>
</g></svg>
<div class='a gr' style='left:0;top:114px;width:375px;height:20px'></div>
<div class='t' style='left:123.5px;top:116.6px;color:#808080;letter-spacing:0.12px'>12:00</div>
<div class='t' style='left:173.7px;top:116.6px;color:#808080;letter-spacing:0.12px'>0/0</div>
<div class='t' style='left:223.6px;top:116.6px;color:#808080;letter-spacing:-0.2px'>Qoob ka ciyaarka Krump</div>
<svg style='left:71.0px;top:114.0px;overflow:hidden' width='24' height='20' viewBox='-12 -10 24 20'><g style='filter:blur(.35px);opacity:.9'>
<path d='M1.8 -1.8 L4.6 -2.4 L6.2 7.1 L-7.6 7.1 C-3.6 5.4 0.2 1.8 1.8 -1.8 Z' fill='#1f9be0'/>
<path d='M4.2 -3.6 L6.2 -3.4 L6.8 7.2 L5 7.2 Z' fill='#3a3032'/>
<path d='M5 6.4 L7.2 6.4 L7.2 7.4 L3.4 7.4 Z' fill='#2a2a2e'/>
<path d='M5.4 -4 L9.2 -5.4' stroke='#d8c4b0' stroke-width='1.2'/>
<ellipse cx='0.4' cy='-5' rx='1.6' ry='1.9' fill='#7a3e22'/>
<ellipse cx='3.3' cy='-6.5' rx='1.6' ry='1.7' fill='#c09a70'/>
<path d='M0.8 -3.4 L4 -4 L4 -1.8 L1.6 -1.4 Z' fill='#e4b490'/>
</g></svg>
<div class='a bl' style='left:0;top:134px;width:375px;height:60px'></div>
<div class='t' style='left:123.5px;top:136.6px;color:#808080;letter-spacing:0.12px'>13:00</div>
<div class='t' style='left:173.7px;top:136.6px;color:#808080;letter-spacing:0.12px'>0/0</div>
<div class='t' style='left:223.6px;top:136.6px;color:#808080;letter-spacing:-0.2px'>Qoob ka ciyaarka guriga</div>
<div class='t' style='left:223.6px;top:153.0px;color:#808080;letter-spacing:-0.2px'>Shaqaalaha 2</div>
<div class='t' style='left:223.6px;top:169.4px;color:#808080;letter-spacing:-0.2px'>Koox: Children</div>
<svg style='left:71.0px;top:154.0px;overflow:hidden' width='24' height='20' viewBox='-12 -10 24 20'><g style='filter:blur(.35px);opacity:.9'>
<ellipse cx='-2.1' cy='-7' rx='2.1' ry='1.5' fill='#d8262c' transform='rotate(-18 -2.1 -7)'/>
<path d='M-1 -5.6 L0.4 -3' stroke='#f0d8d0' stroke-width='.9'/>
<ellipse cx='1.5' cy='-3.4' rx='1.4' ry='1.5' fill='#e05860' opacity='.7'/>
<rect x='0.8' y='-3.6' width='1.5' height='5.4' rx='.7' fill='#2e2424'/>
<path d='M-1.2 -1.4 L0.8 -1.6 L1.2 3 L-1.6 3 Z' fill='#d42a2e'/>
<path d='M-1.8 2.4 L1.4 2.4 L7.2 6.6 L6.6 7.6 L-4.6 9.4 L-5.2 5 Z' fill='#d21f24'/>
</g></svg>
<div class='a gr' style='left:0;top:194px;width:375px;height:60px'></div>
<div class='t' style='left:123.5px;top:196.6px;color:#808080;letter-spacing:0.12px'>14:00</div>
<div class='t' style='left:173.7px;top:196.6px;color:#808080;letter-spacing:0.12px'>0/0</div>
<div class='t' style='left:223.6px;top:196.6px;color:#808080;letter-spacing:-0.2px'>Qoob ka ciyaarka guriga</div>
<div class='t' style='left:223.6px;top:213.0px;color:#808080;letter-spacing:-0.2px'>Shaqaalaha 2</div>
<div class='t' style='left:223.6px;top:229.4px;color:#808080;letter-spacing:-0.2px'>Koox: Children</div>
<svg style='left:71.0px;top:214.0px;overflow:hidden' width='24' height='20' viewBox='-12 -10 24 20'><g style='filter:blur(.35px);opacity:.9'>
<ellipse cx='-2.1' cy='-7' rx='2.1' ry='1.5' fill='#d8262c' transform='rotate(-18 -2.1 -7)'/>
<path d='M-1 -5.6 L0.4 -3' stroke='#f0d8d0' stroke-width='.9'/>
<ellipse cx='1.5' cy='-3.4' rx='1.4' ry='1.5' fill='#e05860' opacity='.7'/>
<rect x='0.8' y='-3.6' width='1.5' height='5.4' rx='.7' fill='#2e2424'/>
<path d='M-1.2 -1.4 L0.8 -1.6 L1.2 3 L-1.6 3 Z' fill='#d42a2e'/>
<path d='M-1.8 2.4 L1.4 2.4 L7.2 6.6 L6.6 7.6 L-4.6 9.4 L-5.2 5 Z' fill='#d21f24'/>
</g></svg>
<div class='a bl' style='left:0;top:254px;width:375px;height:60px'></div>
<div class='a ye' style='left:123px;top:254px;width:252px;height:60px'></div>
<div class='t' style='left:123.5px;top:256.6px;color:#d40000;letter-spacing:0.12px'>15:00</div>
<div class='t' style='left:173.7px;top:256.6px;color:#d40000;letter-spacing:0.12px'>0/1</div>
<div class='t' style='left:223.6px;top:256.6px;color:#d40000;letter-spacing:-0.2px'>Qoob ka ciyaarka guriga</div>
<div class='t' style='left:223.6px;top:273.0px;color:#d40000;letter-spacing:-0.2px'>Shaqaalaha 2</div>
<div class='t' style='left:223.6px;top:289.4px;color:#d40000;letter-spacing:-0.2px'>Koox: Children</div>
<svg style='left:71.0px;top:274.0px;overflow:hidden' width='24' height='20' viewBox='-12 -10 24 20'><g style='filter:blur(.35px);opacity:.9'>
<ellipse cx='-2.1' cy='-7' rx='2.1' ry='1.5' fill='#d8262c' transform='rotate(-18 -2.1 -7)'/>
<path d='M-1 -5.6 L0.4 -3' stroke='#f0d8d0' stroke-width='.9'/>
<ellipse cx='1.5' cy='-3.4' rx='1.4' ry='1.5' fill='#e05860' opacity='.7'/>
<rect x='0.8' y='-3.6' width='1.5' height='5.4' rx='.7' fill='#2e2424'/>
<path d='M-1.2 -1.4 L0.8 -1.6 L1.2 3 L-1.6 3 Z' fill='#d42a2e'/>
<path d='M-1.8 2.4 L1.4 2.4 L7.2 6.6 L6.6 7.6 L-4.6 9.4 L-5.2 5 Z' fill='#d21f24'/>
</g></svg>
<div class='a gr' style='left:0;top:314px;width:375px;height:60px'></div>
<div class='t' style='left:123.5px;top:316.6px;color:#808080;letter-spacing:0.12px'>16:00</div>
<div class='t' style='left:173.7px;top:316.6px;color:#808080;letter-spacing:0.12px'>0/0</div>
<div class='t' style='left:223.6px;top:316.6px;color:#808080;letter-spacing:-0.2px'>Qoob ka ciyaarka guriga</div>
<div class='t' style='left:223.6px;top:333.0px;color:#808080;letter-spacing:-0.2px'>Shaqaalaha 2</div>
<div class='t' style='left:223.6px;top:349.4px;color:#808080;letter-spacing:-0.2px'>Koox: Children</div>
<svg style='left:71.0px;top:334.0px;overflow:hidden' width='24' height='20' viewBox='-12 -10 24 20'><g style='filter:blur(.35px);opacity:.9'>
<ellipse cx='-2.1' cy='-7' rx='2.1' ry='1.5' fill='#d8262c' transform='rotate(-18 -2.1 -7)'/>
<path d='M-1 -5.6 L0.4 -3' stroke='#f0d8d0' stroke-width='.9'/>
<ellipse cx='1.5' cy='-3.4' rx='1.4' ry='1.5' fill='#e05860' opacity='.7'/>
<rect x='0.8' y='-3.6' width='1.5' height='5.4' rx='.7' fill='#2e2424'/>
<path d='M-1.2 -1.4 L0.8 -1.6 L1.2 3 L-1.6 3 Z' fill='#d42a2e'/>
<path d='M-1.8 2.4 L1.4 2.4 L7.2 6.6 L6.6 7.6 L-4.6 9.4 L-5.2 5 Z' fill='#d21f24'/>
</g></svg>
<div class='a bl' style='left:0;top:374px;width:375px;height:60px'></div>
<div class='t' style='left:123.5px;top:376.6px;color:#808080;letter-spacing:0.12px'>17:00</div>
<div class='t' style='left:173.7px;top:376.6px;color:#808080;letter-spacing:0.12px'>0/0</div>
<div class='t' style='left:223.6px;top:376.6px;color:#808080;letter-spacing:-0.2px'>Qoob ka ciyaarka guriga</div>
<div class='t' style='left:223.6px;top:393.0px;color:#808080;letter-spacing:-0.2px'>Shaqaalaha 2</div>
<div class='t' style='left:223.6px;top:409.4px;color:#808080;letter-spacing:-0.2px'>Koox: Children</div>
<svg style='left:71.0px;top:394.0px;overflow:hidden' width='24' height='20' viewBox='-12 -10 24 20'><g style='filter:blur(.35px);opacity:.9'>
<ellipse cx='-2.1' cy='-7' rx='2.1' ry='1.5' fill='#d8262c' transform='rotate(-18 -2.1 -7)'/>
<path d='M-1 -5.6 L0.4 -3' stroke='#f0d8d0' stroke-width='.9'/>
<ellipse cx='1.5' cy='-3.4' rx='1.4' ry='1.5' fill='#e05860' opacity='.7'/>
<rect x='0.8' y='-3.6' width='1.5' height='5.4' rx='.7' fill='#2e2424'/>
<path d='M-1.2 -1.4 L0.8 -1.6 L1.2 3 L-1.6 3 Z' fill='#d42a2e'/>
<path d='M-1.8 2.4 L1.4 2.4 L7.2 6.6 L6.6 7.6 L-4.6 9.4 L-5.2 5 Z' fill='#d21f24'/>
</g></svg>
<div class='a gr' style='left:0;top:434px;width:375px;height:20px'></div>
<div class='a ye' style='left:123px;top:434px;width:252px;height:20px'></div>
<div class='t' style='left:123.5px;top:436.6px;color:#000;letter-spacing:0.12px'>18:00</div>
<div class='t' style='left:173.7px;top:436.6px;color:#000;letter-spacing:0.12px'>0/1</div>
<div class='t' style='left:223.6px;top:436.6px;color:#000;letter-spacing:-0.2px'>Waacking kutamba</div>
<svg style='left:71.0px;top:434.0px;overflow:hidden' width='24' height='20' viewBox='-12 -10 24 20'><g style='filter:blur(.35px);opacity:.9'>
<path d='M-2 -3.4 L-7.4 -6.6' stroke='#63b43a' stroke-width='2'/>
<path d='M4 -3.4 L8.6 -6.2' stroke='#63b43a' stroke-width='2'/>
<circle cx='-8' cy='-7.2' r='1.1' fill='#f4c8a0'/>
<circle cx='9.4' cy='-6.8' r='1.1' fill='#f4c8a0'/>
<path d='M-2.4 -3.8 L4.4 -3.8 L5.2 2.6 L-3.4 2.6 Z' fill='#ee60a4'/>
<path d='M0 -3.8 L2 -3.8 L2.8 2.6 L-0.8 2.6 Z' fill='#5cb63c'/>
<ellipse cx='0.7' cy='-7.6' rx='2' ry='2.2' fill='#ea5440'/>
<ellipse cx='0.6' cy='-5' rx='1.2' ry='1.5' fill='#f8c83a'/>
<path d='M-4.6 2.9 L5.6 2.9 L6.2 10 L-5.2 10 Z' fill='#c4863c'/>
<rect x='-4.6' y='3.4' width='1.6' height='6' fill='#f0a830'/>
</g></svg>
<div class='a bl' style='left:0;top:454px;width:375px;height:20px'></div>
<div class='t' style='left:123.5px;top:456.6px;color:#808080;letter-spacing:0.12px'>19:00</div>
<div class='t' style='left:173.7px;top:456.6px;color:#808080;letter-spacing:0.12px'>0/0</div>
<div class='t' style='left:223.6px;top:456.6px;color:#808080;letter-spacing:-0.2px'>Waacking kutamba</div>
<svg style='left:71.0px;top:454.0px;overflow:hidden' width='24' height='20' viewBox='-12 -10 24 20'><g style='filter:blur(.35px);opacity:.9'>
<path d='M-2 -3.4 L-7.4 -6.6' stroke='#63b43a' stroke-width='2'/>
<path d='M4 -3.4 L8.6 -6.2' stroke='#63b43a' stroke-width='2'/>
<circle cx='-8' cy='-7.2' r='1.1' fill='#f4c8a0'/>
<circle cx='9.4' cy='-6.8' r='1.1' fill='#f4c8a0'/>
<path d='M-2.4 -3.8 L4.4 -3.8 L5.2 2.6 L-3.4 2.6 Z' fill='#ee60a4'/>
<path d='M0 -3.8 L2 -3.8 L2.8 2.6 L-0.8 2.6 Z' fill='#5cb63c'/>
<ellipse cx='0.7' cy='-7.6' rx='2' ry='2.2' fill='#ea5440'/>
<ellipse cx='0.6' cy='-5' rx='1.2' ry='1.5' fill='#f8c83a'/>
<path d='M-4.6 2.9 L5.6 2.9 L6.2 10 L-5.2 10 Z' fill='#c4863c'/>
<rect x='-4.6' y='3.4' width='1.6' height='6' fill='#f0a830'/>
</g></svg>
<div class='a gr' style='left:0;top:474px;width:375px;height:20px'></div>
<div class='t' style='left:123.5px;top:476.6px;color:#808080;letter-spacing:0.12px'>20:00</div>
<div class='t' style='left:173.7px;top:476.6px;color:#808080;letter-spacing:0.12px'>0/0</div>
<div class='t' style='left:223.6px;top:476.6px;color:#808080;letter-spacing:-0.2px'>Waacking kutamba</div>
<svg style='left:71.0px;top:474.0px;overflow:hidden' width='24' height='20' viewBox='-12 -10 24 20'><g style='filter:blur(.35px);opacity:.9'>
<path d='M-2 -3.4 L-7.4 -6.6' stroke='#63b43a' stroke-width='2'/>
<path d='M4 -3.4 L8.6 -6.2' stroke='#63b43a' stroke-width='2'/>
<circle cx='-8' cy='-7.2' r='1.1' fill='#f4c8a0'/>
<circle cx='9.4' cy='-6.8' r='1.1' fill='#f4c8a0'/>
<path d='M-2.4 -3.8 L4.4 -3.8 L5.2 2.6 L-3.4 2.6 Z' fill='#ee60a4'/>
<path d='M0 -3.8 L2 -3.8 L2.8 2.6 L-0.8 2.6 Z' fill='#5cb63c'/>
<ellipse cx='0.7' cy='-7.6' rx='2' ry='2.2' fill='#ea5440'/>
<ellipse cx='0.6' cy='-5' rx='1.2' ry='1.5' fill='#f8c83a'/>
<path d='M-4.6 2.9 L5.6 2.9 L6.2 10 L-5.2 10 Z' fill='#c4863c'/>
<rect x='-4.6' y='3.4' width='1.6' height='6' fill='#f0a830'/>
</g></svg>
<div class='a bl' style='left:0;top:494px;width:375px;height:20px'></div>
<div class='t' style='left:123.5px;top:496.6px;color:#808080;letter-spacing:0.12px'>21:00</div>
<div class='t' style='left:173.7px;top:496.6px;color:#808080;letter-spacing:0.12px'>0/0</div>
<div class='t' style='left:223.6px;top:496.6px;color:#808080;letter-spacing:-0.2px'>Waacking kutamba</div>
<svg style='left:71.0px;top:494.0px;overflow:hidden' width='24' height='20' viewBox='-12 -10 24 20'><g style='filter:blur(.35px);opacity:.9'>
<path d='M-2 -3.4 L-7.4 -6.6' stroke='#63b43a' stroke-width='2'/>
<path d='M4 -3.4 L8.6 -6.2' stroke='#63b43a' stroke-width='2'/>
<circle cx='-8' cy='-7.2' r='1.1' fill='#f4c8a0'/>
<circle cx='9.4' cy='-6.8' r='1.1' fill='#f4c8a0'/>
<path d='M-2.4 -3.8 L4.4 -3.8 L5.2 2.6 L-3.4 2.6 Z' fill='#ee60a4'/>
<path d='M0 -3.8 L2 -3.8 L2.8 2.6 L-0.8 2.6 Z' fill='#5cb63c'/>
<ellipse cx='0.7' cy='-7.6' rx='2' ry='2.2' fill='#ea5440'/>
<ellipse cx='0.6' cy='-5' rx='1.2' ry='1.5' fill='#f8c83a'/>
<path d='M-4.6 2.9 L5.6 2.9 L6.2 10 L-5.2 10 Z' fill='#c4863c'/>
<rect x='-4.6' y='3.4' width='1.6' height='6' fill='#f0a830'/>
</g></svg>
<div class='a gr' style='left:0;top:514px;width:375px;height:20px'></div>
<div class='t' style='left:123.5px;top:516.6px;color:#808080;letter-spacing:0.12px'>22:00</div>
<div class='t' style='left:173.7px;top:516.6px;color:#808080;letter-spacing:0.12px'>0/0</div>
<div class='t' style='left:223.6px;top:516.6px;color:#808080;letter-spacing:-0.2px'>Waacking kutamba</div>
<svg style='left:71.0px;top:514.0px;overflow:hidden' width='24' height='20' viewBox='-12 -10 24 20'><g style='filter:blur(.35px);opacity:.9'>
<path d='M-2 -3.4 L-7.4 -6.6' stroke='#63b43a' stroke-width='2'/>
<path d='M4 -3.4 L8.6 -6.2' stroke='#63b43a' stroke-width='2'/>
<circle cx='-8' cy='-7.2' r='1.1' fill='#f4c8a0'/>
<circle cx='9.4' cy='-6.8' r='1.1' fill='#f4c8a0'/>
<path d='M-2.4 -3.8 L4.4 -3.8 L5.2 2.6 L-3.4 2.6 Z' fill='#ee60a4'/>
<path d='M0 -3.8 L2 -3.8 L2.8 2.6 L-0.8 2.6 Z' fill='#5cb63c'/>
<ellipse cx='0.7' cy='-7.6' rx='2' ry='2.2' fill='#ea5440'/>
<ellipse cx='0.6' cy='-5' rx='1.2' ry='1.5' fill='#f8c83a'/>
<path d='M-4.6 2.9 L5.6 2.9 L6.2 10 L-5.2 10 Z' fill='#c4863c'/>
<rect x='-4.6' y='3.4' width='1.6' height='6' fill='#f0a830'/>
</g></svg>
<div class='a bl' style='left:0;top:534px;width:375px;height:34px'></div>
<div class='a' style='left:34px;top:534px;width:341px;height:34px;background:#0080c6'></div>
<div class='t' style='left:34px;top:536.3px;color:#fff;letter-spacing:0.12px'>23.08.2024</div>
<div class='t' style='left:223.5px;top:536.3px;color:#fff;letter-spacing:-0.2px'>Jimcaha</div>
<svg style='left:8px;top:542.5px' width='18' height='18' viewBox='-9 -9 18 18'><circle r='7.4' fill='none' stroke='#3c3c3c' stroke-width='1.3'/><path d='M-3 -3 L2.6 2.6 M3 -2 V3 H-2' stroke='#3c3c3c' stroke-width='1.5' fill='none'/></svg>
<div class='a gr' style='left:0;top:568px;width:375px;height:20px'></div>
<div class='t' style='left:123.5px;top:570.6px;color:#808080;letter-spacing:0.12px'>08:00</div>
<div class='t' style='left:173.7px;top:570.6px;color:#808080;letter-spacing:0.12px'>0/0</div>
<div class='t' style='left:223.6px;top:570.6px;color:#808080;letter-spacing:-0.2px'>Qoob ka ciyaarka Krump</div>
<svg style='left:71.0px;top:568.0px;overflow:hidden' width='24' height='20' viewBox='-12 -10 24 20'><g style='filter:blur(.35px);opacity:.9'>
<path d='M1.8 -1.8 L4.6 -2.4 L6.2 7.1 L-7.6 7.1 C-3.6 5.4 0.2 1.8 1.8 -1.8 Z' fill='#1f9be0'/>
<path d='M4.2 -3.6 L6.2 -3.4 L6.8 7.2 L5 7.2 Z' fill='#3a3032'/>
<path d='M5 6.4 L7.2 6.4 L7.2 7.4 L3.4 7.4 Z' fill='#2a2a2e'/>
<path d='M5.4 -4 L9.2 -5.4' stroke='#d8c4b0' stroke-width='1.2'/>
<ellipse cx='0.4' cy='-5' rx='1.6' ry='1.9' fill='#7a3e22'/>
<ellipse cx='3.3' cy='-6.5' rx='1.6' ry='1.7' fill='#c09a70'/>
<path d='M0.8 -3.4 L4 -4 L4 -1.8 L1.6 -1.4 Z' fill='#e4b490'/>
</g></svg>
<div class='a bl' style='left:0;top:588px;width:375px;height:20px'></div>
<div class='t' style='left:123.5px;top:590.6px;color:#808080;letter-spacing:0.12px'>09:00</div>
<div class='t' style='left:173.7px;top:590.6px;color:#808080;letter-spacing:0.12px'>0/0</div>
<div class='t' style='left:223.6px;top:590.6px;color:#808080;letter-spacing:-0.2px'>Qoob ka ciyaarka Krump</div>
<svg style='left:71.0px;top:588.0px;overflow:hidden' width='24' height='20' viewBox='-12 -10 24 20'><g style='filter:blur(.35px);opacity:.9'>
<path d='M1.8 -1.8 L4.6 -2.4 L6.2 7.1 L-7.6 7.1 C-3.6 5.4 0.2 1.8 1.8 -1.8 Z' fill='#1f9be0'/>
<path d='M4.2 -3.6 L6.2 -3.4 L6.8 7.2 L5 7.2 Z' fill='#3a3032'/>
<path d='M5 6.4 L7.2 6.4 L7.2 7.4 L3.4 7.4 Z' fill='#2a2a2e'/>
<path d='M5.4 -4 L9.2 -5.4' stroke='#d8c4b0' stroke-width='1.2'/>
<ellipse cx='0.4' cy='-5' rx='1.6' ry='1.9' fill='#7a3e22'/>
<ellipse cx='3.3' cy='-6.5' rx='1.6' ry='1.7' fill='#c09a70'/>
<path d='M0.8 -3.4 L4 -4 L4 -1.8 L1.6 -1.4 Z' fill='#e4b490'/>
</g></svg>
<div class='a gr' style='left:0;top:608px;width:375px;height:20px'></div>
<div class='t' style='left:123.5px;top:610.6px;color:#808080;letter-spacing:0.12px'>10:00</div>
<div class='t' style='left:173.7px;top:610.6px;color:#808080;letter-spacing:0.12px'>0/0</div>
<div class='t' style='left:223.6px;top:610.6px;color:#808080;letter-spacing:-0.2px'>Qoob ka ciyaarka Krump</div>
<svg style='left:71.0px;top:608.0px;overflow:hidden' width='24' height='20' viewBox='-12 -10 24 20'><g style='filter:blur(.35px);opacity:.9'>
<path d='M1.8 -1.8 L4.6 -2.4 L6.2 7.1 L-7.6 7.1 C-3.6 5.4 0.2 1.8 1.8 -1.8 Z' fill='#1f9be0'/>
<path d='M4.2 -3.6 L6.2 -3.4 L6.8 7.2 L5 7.2 Z' fill='#3a3032'/>
<path d='M5 6.4 L7.2 6.4 L7.2 7.4 L3.4 7.4 Z' fill='#2a2a2e'/>
<path d='M5.4 -4 L9.2 -5.4' stroke='#d8c4b0' stroke-width='1.2'/>
<ellipse cx='0.4' cy='-5' rx='1.6' ry='1.9' fill='#7a3e22'/>
<ellipse cx='3.3' cy='-6.5' rx='1.6' ry='1.7' fill='#c09a70'/>
<path d='M0.8 -3.4 L4 -4 L4 -1.8 L1.6 -1.4 Z' fill='#e4b490'/>
</g></svg>
<div class='a gr' style='left:0;top:628px;width:375px;height:3px'></div>
</div>
<svg style='left:1186.2px;top:175.2px' width='8' height='4'><path d='M0 4 L3.8 0 L7.6 4 Z' fill='#8a8a8a'/></svg>
<div class='a' style='left:1185px;top:188px;width:10px;height:385px;background:#b9b9b9'></div>
<svg style='left:1186.2px;top:850px' width='8' height='4'><path d='M0 0 L3.8 4 L7.6 0 Z' fill='#8a8a8a'/></svg>
<div class='a' style='left:805px;top:864px;width:375px;height:1px;background:#c0c0c0'></div>
<div class='a' style='left:1180px;top:167px;width:1px;height:698px;background:#c0c0c0'></div>
<div class='a' style='left:826px;top:869px;width:302px;height:10px;background:#b9b9b9'></div>
<svg style='left:814.6px;top:870.6px' width='4' height='8'><path d='M4 0 L0 3.7 L4 7.4 Z' fill='#8a8a8a'/></svg>
<svg style='left:1166.6px;top:870.6px' width='4' height='8'><path d='M0 0 L4 3.7 L0 7.4 Z' fill='#8a8a8a'/></svg>
<div class='a' style='left:22px;top:916px;width:198px;height:56px;border:1px solid #b4b4b4;border-top-color:#c0c0c0;border-right-color:#909090;border-bottom:3px solid #0aa0f8;background:#fff'></div>
<div class='t' style='left:81.5px;top:937px;color:#1b9ae6;letter-spacing:-0.16px'>Diiwaangelinta</div>
<svg style='left:187px;top:938px' width='12' height='11' viewBox='0 0 12 11'><path d='M1 1 L11 10 M11 1 L1 10' stroke='#1b9ae6' stroke-width='2' fill='none'/></svg>
<svg style='left:40px;top:932px' width='30' height='26' viewBox='0 0 30 26'><defs><linearGradient id='gtw' x1='0' y1='0' x2='0' y2='1'><stop offset='0' stop-color='#4f7ecb'/><stop offset='1' stop-color='#8fb4ea'/></linearGradient></defs><rect x='0.6' y='0.6' width='28.8' height='24.8' rx='2.2' fill='#eef1fb' stroke='#5a72ba' stroke-width='1.1'/><path d='M1.2 7 V2.8 a1.6 1.6 0 0 1 1.6 -1.6 H27.2 a1.6 1.6 0 0 1 1.6 1.6 V7 Z' fill='url(#gtw)'/><circle cx='25' cy='3.6' r='1.3' fill='#e2442e'/></svg>
<div class='a' style='left:229px;top:976px;width:1px;height:18px;background:#c4c4c4'></div>
<div class='a' style='left:399.5px;top:976px;width:1px;height:18px;background:#c4c4c4'></div>
<div class='a' style='left:578px;top:976px;width:1px;height:18px;background:#c4c4c4'></div>
<div class='a' style='left:727px;top:976px;width:1px;height:18px;background:#c4c4c4'></div>
<div class='a' style='left:876px;top:976px;width:1px;height:18px;background:#c4c4c4'></div>
<div class='a' style='left:1180.5px;top:976px;width:1px;height:18px;background:#c4c4c4'></div>
<div class='t' style='left:70px;top:978.5px;color:#333;letter-spacing:0.09px'>7.2.9059.10 Standard</div>
<div class='t' style='left:281.5px;top:978.5px;color:#333;letter-spacing:0.14px'>localhost (utf8)</div>
<div class='t' style='left:445px;top:978.5px;color:#333;letter-spacing:0.25px'>NIKOLAY (MAIN)</div>
<div class='t' style='left:631px;top:978.5px;color:#333;letter-spacing:0.35px'>22.08.2024</div>
<div class='t' style='left:762.5px;top:978.5px;color:#333;letter-spacing:0.25px'>00:00:00:003</div>
<div class='t' style='left:888.5px;top:978.5px;color:#333;letter-spacing:-0.24px'>Qoob ka ciyaarka Krump</div>
<div class='a' style='left:1206px;top:981px;width:2px;height:2px;background:#777'></div>
<div class='a' style='left:1201px;top:986px;width:2px;height:2px;background:#777'></div>
<div class='a' style='left:1206px;top:986px;width:2px;height:2px;background:#777'></div>
<div class='a' style='left:1196px;top:991px;width:2px;height:2px;background:#777'></div>
<div class='a' style='left:1201px;top:991px;width:2px;height:2px;background:#777'></div>
<div class='a' style='left:1206px;top:991px;width:2px;height:2px;background:#777'></div>
<svg style='left:28px;top:973px' width='600' height='24' viewBox='28 973 600 24'><circle cx='38.9' cy='984.2' r='9.6' fill='#4a84c2'/><circle cx='38.9' cy='979.4' r='1.6' fill='#fff'/><rect x='37.5' y='982' width='2.8' height='7.4' rx='.5' fill='#fff'/><defs><linearGradient id='gdb' x1='0' y1='0' x2='1' y2='0'><stop offset='0' stop-color='#e8963c'/><stop offset='.45' stop-color='#fde6b0'/><stop offset='1' stop-color='#e08a30'/></linearGradient></defs><path d='M244.6 977 V990 a7 2.6 0 0 0 14 0 V977 Z' fill='url(#gdb)' stroke='#c8782a' stroke-width='.8'/><ellipse cx='251.6' cy='977' rx='7' ry='2.6' fill='#fbe2a8' stroke='#c8782a' stroke-width='.8'/><path d='M244.6 981.4 a7 2.6 0 0 0 14 0 M244.6 985.8 a7 2.6 0 0 0 14 0' fill='none' stroke='#c8782a' stroke-width='.9'/><rect x='592.5' y='976' width='16.6' height='17' fill='#eef1fb' stroke='#6a80c6' stroke-width='1'/><rect x='592.5' y='976' width='16.6' height='3.2' fill='#e0584c' stroke='#c04a40' stroke-width='.7'/><text x='600.8' y='990.6' font-family='Liberation Serif' font-weight='bold' font-size='11.5' text-anchor='middle' fill='#2a2a3a' letter-spacing='-.4'>31</text></svg><svg style='left:412px;top:975.6px' width='18.36' height='17.34' viewBox='0 0 18 17'><defs><linearGradient id='gub' x1='0' y1='0' x2='0' y2='1'><stop offset='0' stop-color='#a4cc48'/><stop offset='1' stop-color='#6e9e22'/></linearGradient></defs><path d='M0.4 15.4 C0.4 11.2 4 10 9 10 C14 10 17.6 11.2 17.6 15.4 C13.6 16.8 4.4 16.8 0.4 15.4 Z' fill='url(#gub)' stroke='#5e8a1e' stroke-width='.6'/><ellipse cx='8.9' cy='6.2' rx='4.1' ry='5.4' fill='#f6d4a8' stroke='#c8905c' stroke-width='.5'/><path d='M4.4 7.2 C3 2.4 5.8 0.2 9.2 0.2 C12.8 0.2 14.8 2.8 13.4 7.2 C13.2 4.6 12.4 3.4 9 3.4 C6 3.4 4.8 4.6 4.4 7.2 Z' fill='#c26c2c'/></svg>
</body></html>
